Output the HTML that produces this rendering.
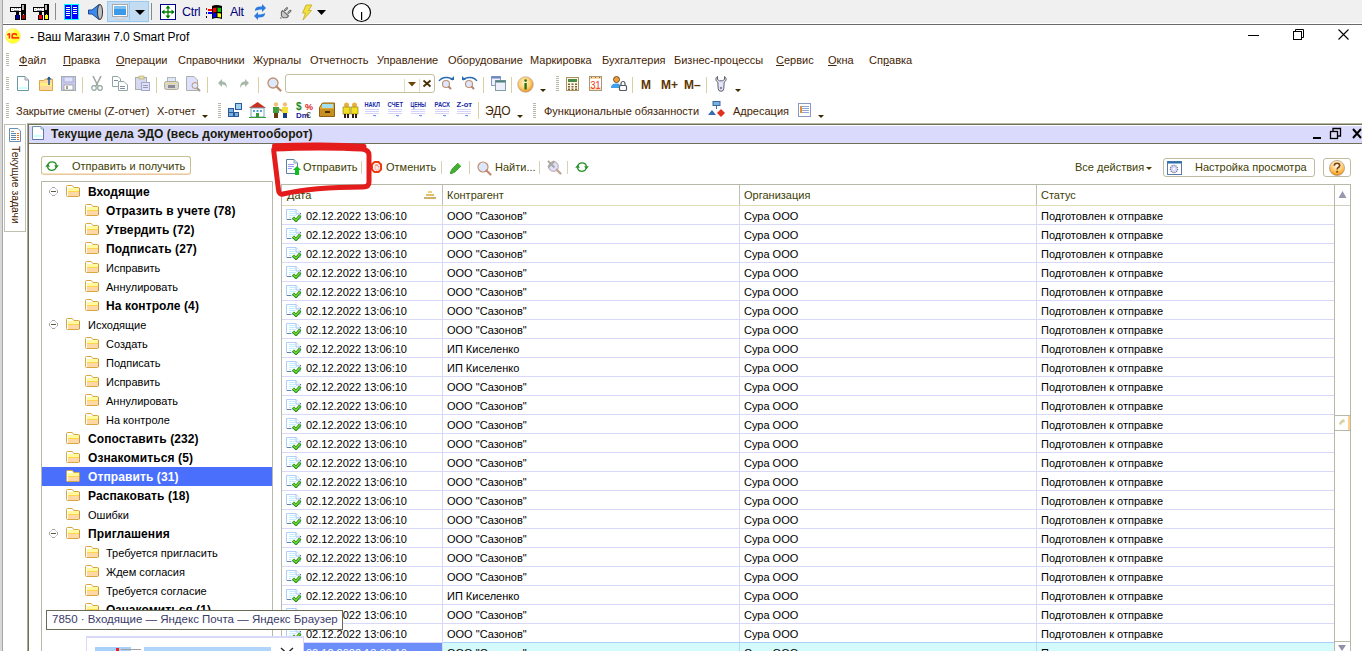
<!DOCTYPE html>
<html><head><meta charset="utf-8"><style>
html,body{margin:0;padding:0;width:1362px;height:651px;overflow:hidden;background:#fff}
body>div,body>svg{position:absolute;box-sizing:border-box}
body>div{box-sizing:content-box}
.t{white-space:pre;font-family:"Liberation Sans",sans-serif;font-size:11px;line-height:13px}
svg{overflow:visible}
</style></head><body>
<div style="left:0px;top:0px;width:1362px;height:23px;background:#f0f0f0"></div>
<div style="left:0px;top:23px;width:1362px;height:1px;background:#fff"></div>
<div style="left:0px;top:24px;width:1362px;height:1px;background:#6a6a6a"></div>
<div style="left:0px;top:0px;width:2px;height:651px;background:#d8d8d8"></div>
<div style="left:2px;top:0px;width:1px;height:651px;background:#a6a6a6"></div>
<div class="t" style="left:30px;top:31px;font-size:12px;color:#000;letter-spacing:-0.1px">- Ваш Магазин 7.0 Smart Prof</div>
<svg style="left:1248px;top:35px;" width="12" height="2" viewBox="0 0 12 2"><rect x="0" y="0" width="11" height="1" fill="#000"/></svg>
<svg style="left:1293px;top:29px;" width="12" height="12" viewBox="0 0 12 12"><rect x="0.5" y="2.5" width="8" height="8" fill="none" stroke="#000"/><path d="M2.5 2.5V0.5H10.5V8.5H8.5" fill="none" stroke="#000"/></svg>
<svg style="left:1338px;top:29px;" width="12" height="12" viewBox="0 0 12 12"><path d="M0.5 0.5L10.5 10.5M10.5 0.5L0.5 10.5" stroke="#000" stroke-width="1.1"/></svg>
<div class="t" style="left:19px;top:54px;color:#442404"><u>Ф</u>айл</div>
<div class="t" style="left:63px;top:54px;color:#442404"><u>П</u>равка</div>
<div class="t" style="left:116px;top:54px;color:#442404"><u>О</u>перации</div>
<div class="t" style="left:178px;top:54px;color:#442404">Справочники</div>
<div class="t" style="left:253px;top:54px;color:#442404">Журналы</div>
<div class="t" style="left:310px;top:54px;color:#442404">Отчетность</div>
<div class="t" style="left:377px;top:54px;color:#442404">Управление</div>
<div class="t" style="left:448px;top:54px;color:#442404">Оборудование</div>
<div class="t" style="left:530px;top:54px;color:#442404">Маркировка</div>
<div class="t" style="left:602px;top:54px;color:#442404">Бухгалтерия</div>
<div class="t" style="left:674px;top:54px;color:#442404">Бизнес-процессы</div>
<div class="t" style="left:776px;top:54px;color:#442404"><u>С</u>ервис</div>
<div class="t" style="left:828px;top:54px;color:#442404"><u>О</u>кна</div>
<div class="t" style="left:869px;top:54px;color:#442404">Сп<u>р</u>авка</div>
<svg style="left:6px;top:53px;" width="3" height="13" viewBox="0 0 3 13"><rect x="0" y="0" width="3" height="1" fill="#b8b8a8"/><rect x="0" y="2" width="3" height="1" fill="#b8b8a8"/><rect x="0" y="4" width="3" height="1" fill="#b8b8a8"/><rect x="0" y="6" width="3" height="1" fill="#b8b8a8"/><rect x="0" y="8" width="3" height="1" fill="#b8b8a8"/><rect x="0" y="10" width="3" height="1" fill="#b8b8a8"/><rect x="0" y="12" width="3" height="1" fill="#b8b8a8"/></svg>
<svg style="left:6px;top:77px;" width="3" height="14" viewBox="0 0 3 14"><rect x="0" y="0" width="3" height="1" fill="#b8b8a8"/><rect x="0" y="2" width="3" height="1" fill="#b8b8a8"/><rect x="0" y="4" width="3" height="1" fill="#b8b8a8"/><rect x="0" y="6" width="3" height="1" fill="#b8b8a8"/><rect x="0" y="8" width="3" height="1" fill="#b8b8a8"/><rect x="0" y="10" width="3" height="1" fill="#b8b8a8"/><rect x="0" y="12" width="3" height="1" fill="#b8b8a8"/></svg>
<svg style="left:17px;top:76px;" width="12" height="15" viewBox="0 0 12 15"><path d="M0.5 0.5H8L11.5 4V14.5H0.5Z" fill="#fff" stroke="#6a98a0"/><path d="M8 0.5V4H11.5" fill="#dde" stroke="#99a"/><rect x="2" y="11" width="8" height="2" fill="#cff"/></svg>
<svg style="left:39px;top:76px;" width="15" height="15" viewBox="0 0 15 15"><path d="M0.5 4.5H5L6 3H13.5V14.5H0.5Z" fill="#ffd8a0" stroke="#e0a840"/><rect x="1" y="7" width="12" height="3" fill="#fff080"/><path d="M10 1V9" stroke="#1a5aa0" stroke-width="1.5"/><path d="M7.5 3.5L10 0.5L12.5 3.5" fill="#1a5aa0"/></svg>
<svg style="left:61px;top:76px;" width="15" height="15" viewBox="0 0 15 15"><rect x="0.5" y="0.5" width="14" height="14" fill="#c8c8f0" stroke="#a0b0b0"/><rect x="3" y="1" width="9" height="5" fill="#e0e0ff" stroke="#a8a8c0" stroke-width="0.8"/><rect x="3" y="9" width="9" height="5" fill="#fff" stroke="#a0a098" stroke-width="0.8"/><rect x="5" y="10" width="2" height="3" fill="#a0a098"/></svg>
<div style="left:82px;top:77px;width:1px;height:16px;background:#d8d0a0"></div>
<svg style="left:91px;top:76px;" width="12" height="15" viewBox="0 0 12 15"><path d="M2 0L7 10M10 0L5 10" stroke="#a0a8a0" stroke-width="1.6"/><circle cx="3" cy="12" r="2.3" fill="none" stroke="#90a8a0" stroke-width="1.2"/><circle cx="9" cy="12" r="2.3" fill="none" stroke="#90a8a0" stroke-width="1.2"/></svg>
<svg style="left:112px;top:76px;" width="16" height="15" viewBox="0 0 16 15"><path d="M0.5 0.5H6L8.5 3V10.5H0.5Z" fill="#fff" stroke="#90a8a0"/><path d="M6.5 5.5H12L15.5 9V14.5H6.5Z" fill="#fff" stroke="#90a8a0"/><rect x="2" y="4" width="4" height="1" fill="#88a"/><rect x="8" y="10" width="5" height="1" fill="#88a"/><rect x="8" y="12" width="5" height="1" fill="#88a"/></svg>
<svg style="left:135px;top:76px;" width="15" height="15" viewBox="0 0 15 15"><rect x="0.5" y="1.5" width="11" height="12" fill="#d8d8f0" stroke="#a8b0a8"/><rect x="4" y="0" width="5" height="3" fill="#e8e0a0" stroke="#b0a870" stroke-width="0.6"/><rect x="6.5" y="6.5" width="8" height="8" fill="#e0e0ff" stroke="#a0a8d0"/><rect x="8" y="9" width="5" height="1" fill="#99a"/><rect x="8" y="11" width="5" height="1" fill="#99a"/></svg>
<div style="left:156px;top:77px;width:1px;height:16px;background:#d8d0a0"></div>
<svg style="left:164px;top:77px;" width="15" height="14" viewBox="0 0 15 14"><rect x="3.5" y="0.5" width="8" height="4" fill="#dde8ff" stroke="#b0b8b0"/><rect x="0.5" y="4.5" width="14" height="8" rx="2" fill="#d8d8d0" stroke="#b0a898"/><rect x="4" y="8" width="7" height="3" fill="#8a8a98"/><rect x="2" y="6" width="11" height="1" fill="#e8d890"/></svg>
<svg style="left:186px;top:76px;" width="15" height="15" viewBox="0 0 15 15"><path d="M0.5 0.5H8L11.5 4V14.5H0.5Z" fill="#dde0ff" stroke="#b0b0a8"/><circle cx="9" cy="9.5" r="3" fill="#d8e8ff" stroke="#c09070"/><path d="M11 12L14 15" stroke="#a09890" stroke-width="2"/></svg>
<div style="left:207px;top:77px;width:1px;height:16px;background:#d8d0a0"></div>
<svg style="left:218px;top:79px;" width="10" height="9" viewBox="0 0 10 9"><path d="M4 0L0 4L4 8V5.5C6.5 5.5 8 6.5 9 9C9 4.5 7 2.5 4 2.5Z" fill="#a8b8a8"/></svg>
<svg style="left:239px;top:79px;" width="10" height="9" viewBox="0 0 10 9"><path d="M6 0L10 4L6 8V5.5C3.5 5.5 2 6.5 1 9C1 4.5 3 2.5 6 2.5Z" fill="#a8b8a8"/></svg>
<div style="left:258px;top:77px;width:1px;height:16px;background:#d8d0a0"></div>
<svg style="left:267px;top:77px;" width="15" height="15" viewBox="0 0 15 15"><circle cx="6" cy="6" r="5" fill="#dde8ff" stroke="#c09070" stroke-width="1.3"/><path d="M9.5 9.5L13.5 13.5" stroke="#c08870" stroke-width="2.3" stroke-linecap="round"/></svg>
<div style="left:285px;top:74px;width:148px;height:17px;border:1px solid #c4c0a0;border-radius:3px;background:#fff"></div>
<div style="left:404px;top:79px;width:1px;height:13px;background:#e0dcc0"></div>
<div style="left:419px;top:79px;width:1px;height:13px;background:#e0dcc0"></div>
<svg style="left:408px;top:82px;" width="8" height="5" viewBox="0 0 8 5"><path d="M0 0H8L4 4.5Z" fill="#6a4408"/></svg>
<svg style="left:423px;top:80px;" width="8" height="7" viewBox="0 0 8 7"><path d="M0.5 0.5L7.5 6.5M7.5 0.5L0.5 6.5" stroke="#4a3000" stroke-width="1.8"/></svg>
<svg style="left:438px;top:76px;" width="17" height="14" viewBox="0 0 17 14"><path d="M1 5C4 0.5 12 0.5 15 4" fill="none" stroke="#2a6ab0" stroke-width="1.3"/><path d="M12 4H16V0Z" fill="#2a6ab0"/><circle cx="8" cy="8" r="3.5" fill="#dde8ff" stroke="#c09070" stroke-width="1.1"/><path d="M10.5 10.5L13 13" stroke="#b08070" stroke-width="2"/></svg>
<svg style="left:461px;top:76px;" width="17" height="14" viewBox="0 0 17 14"><path d="M2 4C5 0.5 13 0.5 16 5" fill="none" stroke="#2a6ab0" stroke-width="1.3"/><path d="M5 4H1V0Z" fill="#2a6ab0"/><circle cx="8" cy="8" r="3.5" fill="#dde8ff" stroke="#c09070" stroke-width="1.1"/><path d="M10.5 10.5L13 13" stroke="#b08070" stroke-width="2"/></svg>
<div style="left:483px;top:77px;width:1px;height:16px;background:#d8d0a0"></div>
<svg style="left:491px;top:76px;" width="15" height="15" viewBox="0 0 15 15"><rect x="0.5" y="0.5" width="9" height="9" fill="#eef" stroke="#8898c8"/><rect x="0.5" y="0.5" width="9" height="2" fill="#6888c0"/><rect x="4.5" y="4.5" width="10" height="10" fill="#eef" stroke="#80a0a0"/><rect x="4.5" y="4.5" width="10" height="2" fill="#508080"/></svg>
<div style="left:511px;top:77px;width:1px;height:16px;background:#d8d0a0"></div>
<svg style="left:517px;top:76px;" width="17" height="17" viewBox="0 0 17 17"><defs><radialGradient id="gi" cx="0.45" cy="0.4" r="0.6"><stop offset="0" stop-color="#fff8d8"/><stop offset="0.6" stop-color="#ffd070"/><stop offset="1" stop-color="#e89020"/></radialGradient></defs><circle cx="8.5" cy="8.5" r="7.8" fill="url(#gi)" stroke="#b0a0a0" stroke-width="0.6"/><rect x="7.4" y="7" width="2.4" height="6.5" fill="#307010"/><circle cx="8.6" cy="4.6" r="1.3" fill="#307010"/></svg>
<svg style="left:540px;top:89px;" width="6" height="3" viewBox="0 0 6 3"><path d="M0 0H6L3 3Z" fill="#3a2a00"/></svg>
<svg style="left:556px;top:76px;" width="3" height="15" viewBox="0 0 3 15"><rect x="0" y="0" width="3" height="1" fill="#b8b8a8"/><rect x="0" y="2" width="3" height="1" fill="#b8b8a8"/><rect x="0" y="4" width="3" height="1" fill="#b8b8a8"/><rect x="0" y="6" width="3" height="1" fill="#b8b8a8"/><rect x="0" y="8" width="3" height="1" fill="#b8b8a8"/><rect x="0" y="10" width="3" height="1" fill="#b8b8a8"/><rect x="0" y="12" width="3" height="1" fill="#b8b8a8"/><rect x="0" y="14" width="3" height="1" fill="#b8b8a8"/></svg>
<svg style="left:566px;top:77px;" width="13" height="14" viewBox="0 0 13 14"><rect x="0.5" y="0.5" width="12" height="13" fill="#fff8e0" stroke="#a89060"/><rect x="2" y="2" width="9" height="3" fill="#4a8a4a"/><g fill="#806040"><rect x="2" y="6.5" width="2" height="1.5"/><rect x="5.5" y="6.5" width="2" height="1.5"/><rect x="9" y="6.5" width="2" height="1.5"/><rect x="2" y="9" width="2" height="1.5"/><rect x="5.5" y="9" width="2" height="1.5"/><rect x="9" y="9" width="2" height="1.5"/><rect x="2" y="11.5" width="2" height="1.5"/><rect x="5.5" y="11.5" width="2" height="1.5"/><rect x="9" y="11.5" width="2" height="1.5"/></g></svg>
<svg style="left:589px;top:76px;" width="13" height="15" viewBox="0 0 13 15"><rect x="0.5" y="0.5" width="12" height="14" fill="#fff" stroke="#a89878"/><rect x="1" y="1" width="11" height="2" fill="#f8d8a0"/><g fill="#a06030"><rect x="2" y="1" width="1" height="1"/><rect x="6" y="1" width="1" height="1"/><rect x="10" y="1" width="1" height="1"/></g><rect x="1" y="11" width="11" height="3" fill="#ffe0c0"/><text x="6.5" y="12.5" font-family="Liberation Sans" font-size="10" fill="#f03010" text-anchor="middle" textLength="10" lengthAdjust="spacingAndGlyphs">31</text></svg>
<svg style="left:611px;top:76px;" width="16" height="15" viewBox="0 0 16 15"><circle cx="5.5" cy="3.5" r="3" fill="#e8a040" stroke="#603000" stroke-width="0.8"/><path d="M0 12C0 8.5 2 7.5 5.5 7.5S9 8.5 9 12Z" fill="#40a0f0"/><rect x="8.5" y="9.5" width="7" height="5" rx="1" fill="#fff" stroke="#505860" stroke-width="1.2"/><path d="M10 9.5V7.5A2 2 0 0 1 14 7.5V9.5" fill="none" stroke="#505860" stroke-width="1.2"/></svg>
<div style="left:632px;top:77px;width:1px;height:16px;background:#d8d0a0"></div>
<div class="t" style="left:641px;top:79px;font-weight:bold;font-size:12px;color:#5e3600">M</div>
<div class="t" style="left:661px;top:79px;font-weight:bold;font-size:12px;color:#5e3600">M+</div>
<div class="t" style="left:684px;top:79px;font-weight:bold;font-size:12px;color:#5e3600">M–</div>
<div style="left:706px;top:77px;width:1px;height:16px;background:#d8d0a0"></div>
<svg style="left:715px;top:76px;" width="12" height="16" viewBox="0 0 12 16"><path d="M2.5 0.5C0.3 1.5 0.3 5 2.8 6.2L3.2 12.5A2.8 2.8 0 0 0 8.8 12.5L9.2 6.2C11.7 5 11.7 1.5 9.5 0.5V3.5L7.5 4.8H4.5L2.5 3.5Z" fill="#e4e4fa" stroke="#606068" stroke-width="1"/><circle cx="6" cy="12" r="1.2" fill="#8888a0"/></svg>
<svg style="left:735px;top:89px;" width="6" height="3" viewBox="0 0 6 3"><path d="M0 0H6L3 3Z" fill="#3a2a00"/></svg>
<svg style="left:6px;top:103px;" width="3" height="15" viewBox="0 0 3 15"><rect x="0" y="0" width="3" height="1" fill="#b8b8a8"/><rect x="0" y="2" width="3" height="1" fill="#b8b8a8"/><rect x="0" y="4" width="3" height="1" fill="#b8b8a8"/><rect x="0" y="6" width="3" height="1" fill="#b8b8a8"/><rect x="0" y="8" width="3" height="1" fill="#b8b8a8"/><rect x="0" y="10" width="3" height="1" fill="#b8b8a8"/><rect x="0" y="12" width="3" height="1" fill="#b8b8a8"/><rect x="0" y="14" width="3" height="1" fill="#b8b8a8"/></svg>
<div class="t" style="left:16px;top:105px;color:#442404">Закрытие смены (Z-отчет)</div>
<div class="t" style="left:157px;top:105px;color:#442404">X-отчет</div>
<svg style="left:202px;top:115px;" width="6" height="3" viewBox="0 0 6 3"><path d="M0 0H6L3 3Z" fill="#3a2a00"/></svg>
<svg style="left:218px;top:103px;" width="3" height="15" viewBox="0 0 3 15"><rect x="0" y="0" width="3" height="1" fill="#b8b8a8"/><rect x="0" y="2" width="3" height="1" fill="#b8b8a8"/><rect x="0" y="4" width="3" height="1" fill="#b8b8a8"/><rect x="0" y="6" width="3" height="1" fill="#b8b8a8"/><rect x="0" y="8" width="3" height="1" fill="#b8b8a8"/><rect x="0" y="10" width="3" height="1" fill="#b8b8a8"/><rect x="0" y="12" width="3" height="1" fill="#b8b8a8"/><rect x="0" y="14" width="3" height="1" fill="#b8b8a8"/></svg>
<svg style="left:228px;top:103px;" width="14" height="14" viewBox="0 0 14 14"><rect x="0.5" y="5.5" width="5" height="4" fill="#7ab0e0" stroke="#2a5a9a"/><rect x="0.5" y="9.5" width="5" height="4" fill="#7ab0e0" stroke="#2a5a9a"/><rect x="6.5" y="9.5" width="4" height="4" fill="#7ab0e0" stroke="#2a5a9a"/><rect x="7.5" y="0.5" width="6" height="6" fill="#a0d0f0" stroke="#2a5a9a"/></svg>
<svg style="left:249px;top:102px;" width="17" height="16" viewBox="0 0 17 16"><path d="M0 6L8.5 0L17 6Z" fill="#c83020"/><rect x="2" y="6" width="13" height="9" fill="#fff" stroke="#7ab"/><g fill="#5aa0d8"><rect x="4" y="8" width="2" height="2"/><rect x="7.5" y="8" width="2" height="2"/><rect x="11" y="8" width="2" height="2"/></g><rect x="7" y="11" width="3" height="4" fill="#3a9a3a"/><rect x="0" y="15" width="17" height="1" fill="#3a9a3a"/></svg>
<svg style="left:272px;top:102px;" width="18" height="16" viewBox="0 0 18 16"><circle cx="4" cy="2.5" r="2.2" fill="#f0c080"/><circle cx="13" cy="2.5" r="2.2" fill="#f0c080"/><rect x="1" y="5" width="6" height="6" fill="#40a040"/><rect x="10" y="5" width="6" height="6" fill="#f0e040"/><path d="M7 7L10 9" stroke="#c08040" stroke-width="2"/><rect x="2" y="11" width="2" height="5" fill="#6a3a10"/><rect x="4" y="11" width="2" height="5" fill="#6a3a10"/><rect x="11" y="11" width="2" height="5" fill="#1a3a8a"/><rect x="13" y="11" width="2" height="5" fill="#1a3a8a"/></svg>
<svg style="left:296px;top:102px;" width="17" height="16" viewBox="0 0 17 16"><text x="0" y="8" font-family="Liberation Sans" font-weight="bold" font-size="10" fill="#1a8a1a">$</text><text x="9" y="8" font-family="Liberation Sans" font-weight="bold" font-size="9" fill="#e02020">%</text><text x="0" y="16" font-family="Liberation Sans" font-weight="bold" font-size="8" fill="#1a1aa0">Dm</text><text x="10" y="16" font-family="Liberation Sans" font-size="9" fill="#3a3a3a">€</text></svg>
<svg style="left:319px;top:102px;" width="16" height="16" viewBox="0 0 16 16"><path d="M0.5 5.5L3.5 1H15.5V14.5H0.5Z" fill="#e0a830" stroke="#8a6010"/><rect x="3" y="2" width="11" height="4" fill="#a0e0f0"/><rect x="1" y="7" width="14" height="7" fill="#c89020"/><rect x="6" y="9" width="5" height="2" fill="#503000"/></svg>
<svg style="left:342px;top:102px;" width="17" height="16" viewBox="0 0 17 16"><circle cx="4.5" cy="3" r="2.5" fill="#e8b040"/><circle cx="12.5" cy="3" r="2.5" fill="#e8b040"/><rect x="1" y="5" width="7" height="7" fill="#f0e020" stroke="#8a7010" stroke-width="0.6"/><rect x="9" y="5" width="7" height="7" fill="#f0e020" stroke="#8a7010" stroke-width="0.6"/><rect x="2" y="12" width="2" height="4" fill="#302010"/><rect x="5" y="12" width="2" height="4" fill="#302010"/><rect x="10" y="12" width="2" height="4" fill="#302010"/><rect x="13" y="12" width="2" height="4" fill="#302010"/></svg>
<svg style="left:364px;top:102px;" width="17" height="16" viewBox="0 0 17 16"><text x="0.5" y="5" font-family="Liberation Sans" font-weight="bold" font-size="6.8" fill="#1a2aa8" textLength="15.5" lengthAdjust="spacingAndGlyphs">НАКЛ</text><g fill="#d4d4f8"><rect x="1" y="7" width="14" height="1"/><rect x="1" y="9" width="14" height="1"/><rect x="1" y="11" width="14" height="1"/></g><rect x="9" y="13" width="3" height="1" fill="#8888f0"/><rect x="10" y="14" width="2" height="1" fill="#c8f0ff"/></svg>
<svg style="left:387px;top:102px;" width="17" height="16" viewBox="0 0 17 16"><text x="0.5" y="5" font-family="Liberation Sans" font-weight="bold" font-size="6.8" fill="#1a2aa8" textLength="15.5" lengthAdjust="spacingAndGlyphs">СЧЕТ</text><g fill="#d4d4f8"><rect x="1" y="7" width="14" height="1"/><rect x="1" y="9" width="14" height="1"/><rect x="1" y="11" width="14" height="1"/></g><rect x="9" y="13" width="3" height="1" fill="#8888f0"/><rect x="10" y="14" width="2" height="1" fill="#c8f0ff"/></svg>
<svg style="left:410px;top:102px;" width="17" height="16" viewBox="0 0 17 16"><text x="0.5" y="5" font-family="Liberation Sans" font-weight="bold" font-size="6.8" fill="#1a2aa8" textLength="15.5" lengthAdjust="spacingAndGlyphs">ЦЕНЫ</text><g fill="#d4d4f8"><rect x="1" y="7" width="14" height="1"/><rect x="1" y="9" width="14" height="1"/><rect x="1" y="11" width="14" height="1"/></g><rect x="9" y="13" width="3" height="1" fill="#8888f0"/><rect x="10" y="14" width="2" height="1" fill="#c8f0ff"/></svg>
<svg style="left:434px;top:102px;" width="17" height="16" viewBox="0 0 17 16"><text x="0.5" y="5" font-family="Liberation Sans" font-weight="bold" font-size="6.8" fill="#1a2aa8" textLength="15.5" lengthAdjust="spacingAndGlyphs">РАСХ</text><g fill="#d4d4f8"><rect x="1" y="7" width="14" height="1"/><rect x="1" y="9" width="14" height="1"/><rect x="1" y="11" width="14" height="1"/></g><rect x="9" y="13" width="3" height="1" fill="#8888f0"/><rect x="10" y="14" width="2" height="1" fill="#c8f0ff"/></svg>
<svg style="left:456px;top:102px;" width="17" height="16" viewBox="0 0 17 16"><text x="0.5" y="5" font-family="Liberation Sans" font-weight="bold" font-size="6.8" fill="#1a2aa8" textLength="15.5" lengthAdjust="spacingAndGlyphs">Z-от</text><g fill="#d4d4f8"><rect x="1" y="7" width="14" height="1"/><rect x="1" y="9" width="14" height="1"/><rect x="1" y="11" width="14" height="1"/></g><rect x="9" y="13" width="3" height="1" fill="#8888f0"/><rect x="10" y="14" width="2" height="1" fill="#c8f0ff"/></svg>
<div style="left:478px;top:102px;width:1px;height:17px;background:#d8d0a0"></div>
<div class="t" style="left:485px;top:105px;color:#442404;font-size:12px">ЭДО</div>
<svg style="left:517px;top:115px;" width="6" height="3" viewBox="0 0 6 3"><path d="M0 0H6L3 3Z" fill="#3a2a00"/></svg>
<svg style="left:533px;top:103px;" width="3" height="15" viewBox="0 0 3 15"><rect x="0" y="0" width="3" height="1" fill="#b8b8a8"/><rect x="0" y="2" width="3" height="1" fill="#b8b8a8"/><rect x="0" y="4" width="3" height="1" fill="#b8b8a8"/><rect x="0" y="6" width="3" height="1" fill="#b8b8a8"/><rect x="0" y="8" width="3" height="1" fill="#b8b8a8"/><rect x="0" y="10" width="3" height="1" fill="#b8b8a8"/><rect x="0" y="12" width="3" height="1" fill="#b8b8a8"/><rect x="0" y="14" width="3" height="1" fill="#b8b8a8"/></svg>
<div class="t" style="left:544px;top:105px;color:#442404">Функциональные обязанности</div>
<svg style="left:708px;top:101px;" width="17" height="17" viewBox="0 0 17 17"><rect x="5" y="0.5" width="7" height="4" fill="#7ab0e0" stroke="#3a6aa0"/><path d="M8.5 5V8" stroke="#3a6aa0"/><path d="M0 14L4 9L8 14Z" fill="#3a6ab0"/><path d="M9 12L13 8L17 12L13 16Z" fill="#e03020"/></svg>
<div class="t" style="left:733px;top:105px;color:#442404">Адресация</div>
<svg style="left:798px;top:103px;" width="13" height="14" viewBox="0 0 13 14"><rect x="0.5" y="0.5" width="12" height="13" fill="#fff" stroke="#8898c0"/><g fill="#90a8d0"><rect x="2" y="3" width="9" height="1"/><rect x="2" y="5" width="9" height="1"/><rect x="2" y="7" width="9" height="1"/><rect x="2" y="9" width="9" height="1"/></g><rect x="2" y="3" width="2" height="7" fill="#e09040"/></svg>
<svg style="left:818px;top:115px;" width="6" height="3" viewBox="0 0 6 3"><path d="M0 0H6L3 3Z" fill="#3a2a00"/></svg>
<svg style="left:10px;top:4px;" width="16" height="16" viewBox="0 0 16 16"><rect x="0" y="3" width="13" height="5" fill="#000"/><rect x="1" y="4" width="11" height="3" fill="#fff"/><g fill="#999"><rect x="2" y="5" width="1" height="1"/><rect x="4" y="4" width="1" height="1"/><rect x="6" y="4" width="1" height="1"/><rect x="8" y="4" width="1" height="1"/><rect x="4" y="6" width="5" height="1"/></g><rect x="11" y="0" width="5" height="12" fill="#000"/><rect x="12" y="1" width="2" height="5" fill="#bbb"/><rect x="13" y="10" width="1" height="2" fill="#bbb"/><rect x="6" y="8" width="3" height="4" fill="#000"/><rect x="5" y="11" width="5" height="5" fill="#000"/><rect x="6" y="11" width="3" height="4" fill="#0000a0"/><rect x="11" y="11" width="5" height="5" fill="#000"/><rect x="12" y="11" width="3" height="4" fill="#a00000"/></svg>
<svg style="left:33px;top:4px;" width="16" height="16" viewBox="0 0 16 16"><rect x="0" y="3" width="13" height="5" fill="#000"/><rect x="1" y="4" width="11" height="3" fill="#fff"/><g fill="#999"><rect x="2" y="5" width="1" height="1"/><rect x="4" y="4" width="1" height="1"/><rect x="6" y="4" width="1" height="1"/><rect x="8" y="4" width="1" height="1"/><rect x="4" y="6" width="5" height="1"/></g><rect x="11" y="0" width="5" height="12" fill="#000"/><rect x="12" y="1" width="2" height="5" fill="#bbb"/><rect x="13" y="10" width="1" height="2" fill="#bbb"/><rect x="6" y="8" width="3" height="4" fill="#000"/><rect x="5" y="11" width="5" height="5" fill="#000"/><rect x="6" y="11" width="3" height="4" fill="#ff0000"/><rect x="11" y="11" width="5" height="5" fill="#000"/><rect x="12" y="11" width="3" height="4" fill="#ffff00"/></svg>
<div style="left:55px;top:3px;width:1px;height:17px;background:#8a8a8a"></div>
<svg style="left:64px;top:4px;" width="15" height="16" viewBox="0 0 15 16"><rect x="0" y="0" width="15" height="16" fill="#00ffff"/><rect x="1" y="1" width="6" height="14" fill="#0000ff"/><rect x="8" y="1" width="6" height="14" fill="#0000ff"/><g fill="#fff"><rect x="2" y="3" width="4" height="1"/><rect x="2" y="5" width="4" height="1"/><rect x="2" y="7" width="4" height="1"/><rect x="2" y="9" width="4" height="1"/><rect x="2" y="11" width="4" height="1"/><rect x="9" y="3" width="4" height="1"/><rect x="9" y="5" width="4" height="1"/><rect x="9" y="7" width="4" height="1"/><rect x="9" y="9" width="4" height="1"/></g></svg>
<svg style="left:88px;top:4px;" width="15" height="16" viewBox="0 0 15 16"><path d="M0.5 6H4L11 0.5V15.5L4 10H0.5Z" fill="#3a8af0" stroke="#1a4a90"/><ellipse cx="12" cy="8" rx="2.5" ry="7.5" fill="#c0c0c0" stroke="#303030"/></svg>
<div style="left:107px;top:1px;width:42px;height:21px;background:#c4dcf2;border:1px solid #99c9ef;box-sizing:border-box"></div>
<div style="left:129px;top:2px;width:1px;height:18px;background:#99c9ef"></div>
<svg style="left:112px;top:4px;" width="16" height="16" viewBox="0 0 16 16"><rect x="0.5" y="0.5" width="15" height="12" fill="#fff" stroke="#aaa"/><rect x="2" y="2" width="12" height="9" fill="#3a9ae8"/><rect x="2" y="2" width="12" height="3" fill="#7ac0f0"/><rect x="6" y="13" width="4" height="2" fill="#ddd"/><rect x="3" y="15" width="10" height="1" fill="#ccc"/></svg>
<svg style="left:135px;top:10px;" width="10" height="5" viewBox="0 0 10 5"><path d="M0 0H10L5 5Z" fill="#000"/></svg>
<div style="left:151px;top:3px;width:1px;height:17px;background:#8a8a8a"></div>
<svg style="left:160px;top:4px;" width="16" height="16" viewBox="0 0 16 16"><rect x="0.5" y="0.5" width="15" height="15" fill="#fff" stroke="#00008a"/><path d="M8 2V14M2 8H14" stroke="#008000" stroke-width="1.3"/><path d="M8 1.5L5.5 4.5H10.5ZM8 14.5L5.5 11.5H10.5ZM1.5 8L4.5 5.5V10.5ZM14.5 8L11.5 5.5V10.5Z" fill="#008000"/></svg>
<div class="t" style="left:182px;top:6px;font-size:12.5px;color:#00007a;letter-spacing:-0.3px">Ctrl</div>
<svg style="left:206px;top:5px;" width="17" height="14" viewBox="0 0 17 14"><rect x="0" y="3" width="1" height="2" fill="#f00"/><rect x="0" y="7" width="1" height="2" fill="#00f"/><rect x="0" y="11" width="1" height="2" fill="#000"/><rect x="2" y="4" width="4" height="2" fill="#f00"/><rect x="2" y="7" width="4" height="2" fill="#00f"/><path d="M6 1Q10 -1 16 1V14Q10 12 6 14Z" fill="#000"/><path d="M7 3L10.5 2.5V7L7 7.5Z" fill="#f00"/><path d="M11.5 2.5L15 3V7L11.5 7Z" fill="#0c0"/><path d="M7 8.5L10.5 8V12L7 12.5Z" fill="#00f"/><path d="M11.5 8L15 8.5V12.5L11.5 12Z" fill="#ff0"/></svg>
<div class="t" style="left:230px;top:6px;font-size:12.5px;color:#00007a;letter-spacing:-0.3px">Alt</div>
<svg style="left:254px;top:4px;" width="12" height="16" viewBox="0 0 12 16"><path d="M1 7C1 3 4 2.5 8 2.5V0L12 4L8 8V5.5C5 5.5 3.5 6 1 7Z" fill="#2a7ae0"/><path d="M11 9C11 13 8 13.5 4 13.5V16L0 12L4 8V10.5C7 10.5 8.5 10 11 9Z" fill="#2a7ae0"/></svg>
<svg style="left:279px;top:7px;" width="13" height="13" viewBox="0 0 13 13"><path d="M6 3.2L8 1.2M9.4 5.8L11.4 3.8" stroke="#606060" stroke-width="2.2" stroke-linecap="round"/><path d="M6 3.2L8 1.2M9.4 5.8L11.4 3.8" stroke="#e0e0e0" stroke-width="0.8"/><path d="M3.6 3.6L9.6 8.8Q8.6 10.8 7 10.8H4.4L2.4 8.8V5Z" fill="#c8c8c8" stroke="#686868" stroke-width="1.1"/><path d="M4.5 4.5L8.6 8.2" stroke="#707070" stroke-width="0.8"/><path d="M2.4 10.4L1.4 11.6" stroke="#808080" stroke-width="1.6"/></svg>
<svg style="left:301px;top:5px;" width="12" height="15" viewBox="0 0 12 15"><path d="M5 0H11L7.5 5.5H10.5L2 15L4.5 8H1.5Z" fill="#f0e040" stroke="#c8a820" stroke-width="0.8"/></svg>
<svg style="left:317px;top:10px;" width="9" height="5" viewBox="0 0 9 5"><path d="M0 0H9L4.5 5Z" fill="#000"/></svg>
<svg style="left:352px;top:3px;" width="19" height="19" viewBox="0 0 19 19"><circle cx="9.5" cy="9.5" r="9" fill="#fff" stroke="#000" stroke-width="1.2"/><rect x="9" y="9" width="1.2" height="8" fill="#000"/></svg>
<svg style="left:5px;top:28px;" width="16" height="16" viewBox="0 0 16 16"><circle cx="8" cy="8" r="7.6" fill="#ffff30" stroke="#f4d8a0" stroke-width="0.8" stroke-dasharray="1 1"/><path d="M1 8A7 7 0 0 1 8 1L10 1.5L5 13L1.5 10Z" fill="#ffffa0" opacity="0.8"/><path d="M2 6.2L4 5H5.2V10.6H3.6V7L2.2 7.6Z" fill="#ff3a00"/><path d="M7.2 10.5V7.2Q7.2 5.8 8.6 5.8H10.2Q11.6 5.8 11.6 7.4" fill="none" stroke="#ff3a00" stroke-width="1.7"/><path d="M7.2 9.8H14.2" stroke="#ff3a00" stroke-width="1.7"/></svg>
<div style="left:4px;top:124px;width:20px;height:106px;border:1px solid #c0c0b0;background:#fff"></div>
<svg style="left:9px;top:128px;" width="12" height="14" viewBox="0 0 12 14"><path d="M0.5 0.5H9L11.5 3V13.5H0.5Z" fill="#fff" stroke="#6890b0"/><g><rect x="2" y="3" width="3" height="1" fill="#999"/><rect x="2" y="5" width="5" height="1" fill="#58a"/><rect x="8" y="5" width="2" height="1" fill="#f60"/><rect x="2" y="7" width="5" height="1" fill="#58a"/><rect x="8" y="7" width="2" height="1" fill="#f60"/><rect x="2" y="9" width="5" height="1" fill="#58a"/><rect x="8" y="9" width="2" height="1" fill="#f60"/><rect x="2" y="11" width="5" height="1" fill="#58a"/><rect x="8" y="11" width="2" height="1" fill="#f60"/></g></svg>
<div class="t" style="left:9px;top:146px;width:13px;height:80px;writing-mode:vertical-rl;font-size:10.4px;line-height:13px;color:#442404">Текущие задачи</div>
<div style="left:27px;top:123px;width:1335px;height:1px;background:#b8b8a8"></div>
<div style="left:27px;top:123px;width:1px;height:528px;background:#a8a898"></div>
<div style="left:28px;top:124px;width:1334px;height:1px;background:#707058"></div>
<div style="left:28px;top:124px;width:1px;height:527px;background:#707058"></div>
<div style="left:29px;top:126px;width:1333px;height:17px;background:#dadafc"></div>
<div style="left:29px;top:143px;width:1333px;height:1px;background:#707058"></div>
<svg style="left:32px;top:126px;" width="12" height="14" viewBox="0 0 12 14"><path d="M0.5 0.5H9L11.5 3V13.5H0.5Z" fill="#fff" stroke="#6890a8"/><path d="M9 0.5V3H11.5" fill="#cde" stroke="#8ab"/><path d="M11.5 3V13.5H0.5" fill="none" stroke="#6070b0"/><rect x="2" y="9" width="8" height="2" fill="#cff"/></svg>
<div class="t" style="left:51px;top:128px;font-weight:bold;font-size:12px;color:#1a1a08;letter-spacing:0.05px">Текущие дела ЭДО (весь документооборот)</div>
<div style="left:1313px;top:137px;width:8px;height:2px;background:#000"></div>
<svg style="left:1330px;top:128px;" width="11" height="11" viewBox="0 0 11 11"><rect x="0.5" y="3.5" width="7" height="7" fill="none" stroke="#000" stroke-width="1.3"/><path d="M3 3V0.5H10.5V8H8" fill="none" stroke="#000" stroke-width="1.3"/></svg>
<svg style="left:1352px;top:128px;" width="10" height="11" viewBox="0 0 10 11"><path d="M1 1L9 10M9 1L1 10" stroke="#000" stroke-width="2"/></svg>
<div style="left:41px;top:156px;width:148px;height:17px;border:1px solid #c8c090;border-bottom-color:#e8c8a0;border-radius:3px;background:#fff;box-shadow:inset 0 -1px 0 #f8e0c0"></div>
<svg style="left:45px;top:161px;" width="14" height="10" viewBox="0 0 14 10"><path d="M2.8 5.5C2.8 2 5 0.8 7 0.8C9.3 0.8 11 2 11.4 4.3" fill="none" stroke="#209020" stroke-width="1.3"/><path d="M9.2 4.2H13.8L11.5 7.2Z" fill="#209020"/><path d="M11.2 4.8C11.2 8 9 9.3 7 9.3C4.7 9.3 3 8 2.6 5.8" fill="none" stroke="#209020" stroke-width="1.3"/><path d="M0.2 5.8L2.6 2.8L5 5.8Z" fill="#209020"/></svg>
<div class="t" style="left:72px;top:160px;color:#404004">Отправить и получить</div>
<svg style="left:286px;top:159px;" width="15" height="16" viewBox="0 0 15 16"><path d="M0.5 0.5H8L11.5 4V14.5H0.5Z" fill="#fff" stroke="#5a80a0"/><path d="M8 0.5V4H11.5" fill="#cde" stroke="#8ab"/><g fill="#9a9af0"><rect x="2" y="5" width="6" height="1"/><rect x="2" y="7" width="6" height="1"/><rect x="2" y="9" width="4" height="1"/></g><path d="M11 7L15 11H13V16H9V11H7Z" fill="#10c020"/></svg>
<div class="t" style="left:303px;top:161px;color:#404004">Отправить</div>
<div style="left:361px;top:161px;width:1px;height:13px;background:#d8d0b0"></div>
<svg style="left:371px;top:161px;" width="11" height="12" viewBox="0 0 11 12"><path d="M3.5 1H7.5L10 3.5V8.5L7.5 11H3.5L1 8.5V3.5Z" fill="#fff" stroke="#f03a10" stroke-width="2"/><path d="M4 4V8L6 9.5L8 7.5V5L7 6V3.5L6 5V3L5 5V3.5Z" fill="#ffe8e8" stroke="#f07060" stroke-width="0.5"/></svg>
<div class="t" style="left:386px;top:161px;color:#404004">Отменить</div>
<div style="left:441px;top:161px;width:1px;height:13px;background:#d8d0b0"></div>
<svg style="left:450px;top:163px;" width="12" height="11" viewBox="0 0 12 11"><path d="M0 10L2 6L8 0L11 3L5 9L1 11Z" fill="#40b030" stroke="#2a8020" stroke-width="0.6"/><path d="M8 0L11 3" stroke="#a0e070"/></svg>
<div style="left:469px;top:161px;width:1px;height:13px;background:#d8d0b0"></div>
<svg style="left:477px;top:161px;" width="15" height="15" viewBox="0 0 15 15"><circle cx="6" cy="6" r="5" fill="#dde8ff" stroke="#c09070" stroke-width="1.2"/><path d="M9.5 9.5L13.5 13.5" stroke="#c08870" stroke-width="2.2" stroke-linecap="round"/></svg>
<div class="t" style="left:495px;top:161px;color:#404004">Найти...</div>
<div style="left:539px;top:161px;width:1px;height:13px;background:#d8d0b0"></div>
<svg style="left:547px;top:160px;" width="15" height="15" viewBox="0 0 15 15"><circle cx="6.5" cy="6.5" r="4.8" fill="#dde0ff" stroke="#c8b0b0" stroke-width="1.2"/><path d="M9.8 9.8L13.5 13.5" stroke="#c0a898" stroke-width="2.4" stroke-linecap="round"/><path d="M1 1L7.5 7.5M7.5 1L1 7.5" stroke="#a8a8a0" stroke-width="1.8"/></svg>
<div style="left:567px;top:161px;width:1px;height:13px;background:#d8d0b0"></div>
<svg style="left:575px;top:162px;" width="14" height="10" viewBox="0 0 14 10"><path d="M2.8 5.5C2.8 2 5 0.8 7 0.8C9.3 0.8 11 2 11.4 4.3" fill="none" stroke="#209020" stroke-width="1.3"/><path d="M9.2 4.2H13.8L11.5 7.2Z" fill="#209020"/><path d="M11.2 4.8C11.2 8 9 9.3 7 9.3C4.7 9.3 3 8 2.6 5.8" fill="none" stroke="#209020" stroke-width="1.3"/><path d="M0.2 5.8L2.6 2.8L5 5.8Z" fill="#209020"/></svg>
<div class="t" style="left:1075px;top:161px;color:#404004">Все действия</div>
<svg style="left:1146px;top:167px;" width="6" height="3" viewBox="0 0 6 3"><path d="M0 0H6L3 3Z" fill="#4a3a00"/></svg>
<div style="left:1163px;top:158px;width:150px;height:17px;border:1px solid #c0bca0;border-radius:3px;background:#fff"></div>
<svg style="left:1167px;top:161px;" width="15" height="14" viewBox="0 0 15 14"><rect x="0.5" y="0.5" width="14" height="13" fill="#fff" stroke="#5a7aa8"/><rect x="0.5" y="0.5" width="14" height="2" fill="#2a70a8"/><circle cx="7" cy="8" r="3.6" fill="#d8d8ff" stroke="#707888" stroke-width="1.2" stroke-dasharray="1.2 0.8"/><circle cx="7" cy="8" r="1.2" fill="#fff"/></svg>
<div class="t" style="left:1195px;top:161px;color:#404004">Настройка просмотра</div>
<div style="left:1323px;top:158px;width:26px;height:17px;border:1px solid #c0bca0;border-radius:3px;background:#fff"></div>
<svg style="left:1329px;top:160px;" width="16" height="16" viewBox="0 0 16 16"><defs><radialGradient id="gh" cx="0.5" cy="0.3" r="0.7"><stop offset="0" stop-color="#ffffff"/><stop offset="0.35" stop-color="#ffe0b0"/><stop offset="0.8" stop-color="#ffb030"/><stop offset="1" stop-color="#d08020"/></radialGradient></defs><circle cx="8" cy="8" r="7.6" fill="url(#gh)" stroke="#a09080" stroke-width="0.6"/><path d="M5.3 5.8Q5.3 3.2 8 3.2Q10.7 3.2 10.7 5.6Q10.7 7 9 7.8Q8.2 8.2 8.2 9.5" fill="none" stroke="#7a4008" stroke-width="1.6"/><rect x="7.3" y="10.8" width="1.8" height="1.8" fill="#7a4008"/></svg>
<div style="left:41px;top:181px;width:230px;height:480px;border:1px solid #b8b8a8;background:#fff"></div>
<svg style="left:49px;top:187px;" width="9" height="9" viewBox="0 0 9 9"><g fill="#a8a890"><rect x="3" y="0" width="3" height="1"/><rect x="3" y="8" width="3" height="1"/><rect x="0" y="3" width="1" height="3"/><rect x="8" y="3" width="1" height="3"/></g><g fill="#c4c4ff"><rect x="2" y="1" width="1" height="1"/><rect x="1" y="2" width="1" height="1"/><rect x="6" y="1" width="1" height="1"/><rect x="7" y="2" width="1" height="1"/><rect x="1" y="6" width="1" height="1"/><rect x="2" y="7" width="1" height="1"/><rect x="7" y="6" width="1" height="1"/><rect x="6" y="7" width="1" height="1"/></g><rect x="2" y="4" width="5" height="1" fill="#5a5a40"/></svg>
<svg style="left:66px;top:185px;" width="14" height="12" viewBox="0 0 14 12"><path d="M0.5 10.5V1.5Q0.5 0.5 1.5 0.5H6.3L7.8 2.5H12.5Q13.5 2.5 13.5 3.5V10.5Q13.5 11.5 12.5 11.5H1.5Q0.5 11.5 0.5 10.5Z" fill="#fff" stroke="#d8a840"/><rect x="2" y="3" width="11" height="3" fill="#fffaa0"/><rect x="2" y="6" width="11" height="1" fill="#ffd448"/><rect x="2" y="7" width="11" height="4" fill="#ffd8a8"/><rect x="13" y="3" width="1" height="8" fill="#c89848"/></svg>
<div class="t" style="left:88px;top:186px;color:#000;font-weight:bold;font-size:12px;letter-spacing:0.1px">Входящие</div>
<svg style="left:85px;top:204px;" width="14" height="12" viewBox="0 0 14 12"><path d="M0.5 10.5V1.5Q0.5 0.5 1.5 0.5H6.3L7.8 2.5H12.5Q13.5 2.5 13.5 3.5V10.5Q13.5 11.5 12.5 11.5H1.5Q0.5 11.5 0.5 10.5Z" fill="#fff" stroke="#d8a840"/><rect x="2" y="3" width="11" height="3" fill="#fffaa0"/><rect x="2" y="6" width="11" height="1" fill="#ffd448"/><rect x="2" y="7" width="11" height="4" fill="#ffd8a8"/><rect x="13" y="3" width="1" height="8" fill="#c89848"/></svg>
<div class="t" style="left:106px;top:205px;color:#000;font-weight:bold;font-size:12px;letter-spacing:0.1px">Отразить в учете (78)</div>
<svg style="left:85px;top:223px;" width="14" height="12" viewBox="0 0 14 12"><path d="M0.5 10.5V1.5Q0.5 0.5 1.5 0.5H6.3L7.8 2.5H12.5Q13.5 2.5 13.5 3.5V10.5Q13.5 11.5 12.5 11.5H1.5Q0.5 11.5 0.5 10.5Z" fill="#fff" stroke="#d8a840"/><rect x="2" y="3" width="11" height="3" fill="#fffaa0"/><rect x="2" y="6" width="11" height="1" fill="#ffd448"/><rect x="2" y="7" width="11" height="4" fill="#ffd8a8"/><rect x="13" y="3" width="1" height="8" fill="#c89848"/></svg>
<div class="t" style="left:106px;top:224px;color:#000;font-weight:bold;font-size:12px;letter-spacing:0.1px">Утвердить (72)</div>
<svg style="left:85px;top:242px;" width="14" height="12" viewBox="0 0 14 12"><path d="M0.5 10.5V1.5Q0.5 0.5 1.5 0.5H6.3L7.8 2.5H12.5Q13.5 2.5 13.5 3.5V10.5Q13.5 11.5 12.5 11.5H1.5Q0.5 11.5 0.5 10.5Z" fill="#fff" stroke="#d8a840"/><rect x="2" y="3" width="11" height="3" fill="#fffaa0"/><rect x="2" y="6" width="11" height="1" fill="#ffd448"/><rect x="2" y="7" width="11" height="4" fill="#ffd8a8"/><rect x="13" y="3" width="1" height="8" fill="#c89848"/></svg>
<div class="t" style="left:106px;top:243px;color:#000;font-weight:bold;font-size:12px;letter-spacing:0.1px">Подписать (27)</div>
<svg style="left:85px;top:261px;" width="14" height="12" viewBox="0 0 14 12"><path d="M0.5 10.5V1.5Q0.5 0.5 1.5 0.5H6.3L7.8 2.5H12.5Q13.5 2.5 13.5 3.5V10.5Q13.5 11.5 12.5 11.5H1.5Q0.5 11.5 0.5 10.5Z" fill="#fff" stroke="#d8a840"/><rect x="2" y="3" width="11" height="3" fill="#fffaa0"/><rect x="2" y="6" width="11" height="1" fill="#ffd448"/><rect x="2" y="7" width="11" height="4" fill="#ffd8a8"/><rect x="13" y="3" width="1" height="8" fill="#c89848"/></svg>
<div class="t" style="left:106px;top:262px;color:#000">Исправить</div>
<svg style="left:85px;top:280px;" width="14" height="12" viewBox="0 0 14 12"><path d="M0.5 10.5V1.5Q0.5 0.5 1.5 0.5H6.3L7.8 2.5H12.5Q13.5 2.5 13.5 3.5V10.5Q13.5 11.5 12.5 11.5H1.5Q0.5 11.5 0.5 10.5Z" fill="#fff" stroke="#d8a840"/><rect x="2" y="3" width="11" height="3" fill="#fffaa0"/><rect x="2" y="6" width="11" height="1" fill="#ffd448"/><rect x="2" y="7" width="11" height="4" fill="#ffd8a8"/><rect x="13" y="3" width="1" height="8" fill="#c89848"/></svg>
<div class="t" style="left:106px;top:281px;color:#000">Аннулировать</div>
<svg style="left:85px;top:299px;" width="14" height="12" viewBox="0 0 14 12"><path d="M0.5 10.5V1.5Q0.5 0.5 1.5 0.5H6.3L7.8 2.5H12.5Q13.5 2.5 13.5 3.5V10.5Q13.5 11.5 12.5 11.5H1.5Q0.5 11.5 0.5 10.5Z" fill="#fff" stroke="#d8a840"/><rect x="2" y="3" width="11" height="3" fill="#fffaa0"/><rect x="2" y="6" width="11" height="1" fill="#ffd448"/><rect x="2" y="7" width="11" height="4" fill="#ffd8a8"/><rect x="13" y="3" width="1" height="8" fill="#c89848"/></svg>
<div class="t" style="left:106px;top:300px;color:#000;font-weight:bold;font-size:12px;letter-spacing:0.1px">На контроле (4)</div>
<svg style="left:49px;top:320px;" width="9" height="9" viewBox="0 0 9 9"><g fill="#a8a890"><rect x="3" y="0" width="3" height="1"/><rect x="3" y="8" width="3" height="1"/><rect x="0" y="3" width="1" height="3"/><rect x="8" y="3" width="1" height="3"/></g><g fill="#c4c4ff"><rect x="2" y="1" width="1" height="1"/><rect x="1" y="2" width="1" height="1"/><rect x="6" y="1" width="1" height="1"/><rect x="7" y="2" width="1" height="1"/><rect x="1" y="6" width="1" height="1"/><rect x="2" y="7" width="1" height="1"/><rect x="7" y="6" width="1" height="1"/><rect x="6" y="7" width="1" height="1"/></g><rect x="2" y="4" width="5" height="1" fill="#5a5a40"/></svg>
<svg style="left:66px;top:318px;" width="14" height="12" viewBox="0 0 14 12"><path d="M0.5 10.5V1.5Q0.5 0.5 1.5 0.5H6.3L7.8 2.5H12.5Q13.5 2.5 13.5 3.5V10.5Q13.5 11.5 12.5 11.5H1.5Q0.5 11.5 0.5 10.5Z" fill="#fff" stroke="#d8a840"/><rect x="2" y="3" width="11" height="3" fill="#fffaa0"/><rect x="2" y="6" width="11" height="1" fill="#ffd448"/><rect x="2" y="7" width="11" height="4" fill="#ffd8a8"/><rect x="13" y="3" width="1" height="8" fill="#c89848"/></svg>
<div class="t" style="left:88px;top:319px;color:#000">Исходящие</div>
<svg style="left:85px;top:337px;" width="14" height="12" viewBox="0 0 14 12"><path d="M0.5 10.5V1.5Q0.5 0.5 1.5 0.5H6.3L7.8 2.5H12.5Q13.5 2.5 13.5 3.5V10.5Q13.5 11.5 12.5 11.5H1.5Q0.5 11.5 0.5 10.5Z" fill="#fff" stroke="#d8a840"/><rect x="2" y="3" width="11" height="3" fill="#fffaa0"/><rect x="2" y="6" width="11" height="1" fill="#ffd448"/><rect x="2" y="7" width="11" height="4" fill="#ffd8a8"/><rect x="13" y="3" width="1" height="8" fill="#c89848"/></svg>
<div class="t" style="left:106px;top:338px;color:#000">Создать</div>
<svg style="left:85px;top:356px;" width="14" height="12" viewBox="0 0 14 12"><path d="M0.5 10.5V1.5Q0.5 0.5 1.5 0.5H6.3L7.8 2.5H12.5Q13.5 2.5 13.5 3.5V10.5Q13.5 11.5 12.5 11.5H1.5Q0.5 11.5 0.5 10.5Z" fill="#fff" stroke="#d8a840"/><rect x="2" y="3" width="11" height="3" fill="#fffaa0"/><rect x="2" y="6" width="11" height="1" fill="#ffd448"/><rect x="2" y="7" width="11" height="4" fill="#ffd8a8"/><rect x="13" y="3" width="1" height="8" fill="#c89848"/></svg>
<div class="t" style="left:106px;top:357px;color:#000">Подписать</div>
<svg style="left:85px;top:375px;" width="14" height="12" viewBox="0 0 14 12"><path d="M0.5 10.5V1.5Q0.5 0.5 1.5 0.5H6.3L7.8 2.5H12.5Q13.5 2.5 13.5 3.5V10.5Q13.5 11.5 12.5 11.5H1.5Q0.5 11.5 0.5 10.5Z" fill="#fff" stroke="#d8a840"/><rect x="2" y="3" width="11" height="3" fill="#fffaa0"/><rect x="2" y="6" width="11" height="1" fill="#ffd448"/><rect x="2" y="7" width="11" height="4" fill="#ffd8a8"/><rect x="13" y="3" width="1" height="8" fill="#c89848"/></svg>
<div class="t" style="left:106px;top:376px;color:#000">Исправить</div>
<svg style="left:85px;top:394px;" width="14" height="12" viewBox="0 0 14 12"><path d="M0.5 10.5V1.5Q0.5 0.5 1.5 0.5H6.3L7.8 2.5H12.5Q13.5 2.5 13.5 3.5V10.5Q13.5 11.5 12.5 11.5H1.5Q0.5 11.5 0.5 10.5Z" fill="#fff" stroke="#d8a840"/><rect x="2" y="3" width="11" height="3" fill="#fffaa0"/><rect x="2" y="6" width="11" height="1" fill="#ffd448"/><rect x="2" y="7" width="11" height="4" fill="#ffd8a8"/><rect x="13" y="3" width="1" height="8" fill="#c89848"/></svg>
<div class="t" style="left:106px;top:395px;color:#000">Аннулировать</div>
<svg style="left:85px;top:413px;" width="14" height="12" viewBox="0 0 14 12"><path d="M0.5 10.5V1.5Q0.5 0.5 1.5 0.5H6.3L7.8 2.5H12.5Q13.5 2.5 13.5 3.5V10.5Q13.5 11.5 12.5 11.5H1.5Q0.5 11.5 0.5 10.5Z" fill="#fff" stroke="#d8a840"/><rect x="2" y="3" width="11" height="3" fill="#fffaa0"/><rect x="2" y="6" width="11" height="1" fill="#ffd448"/><rect x="2" y="7" width="11" height="4" fill="#ffd8a8"/><rect x="13" y="3" width="1" height="8" fill="#c89848"/></svg>
<div class="t" style="left:106px;top:414px;color:#000">На контроле</div>
<svg style="left:66px;top:432px;" width="14" height="12" viewBox="0 0 14 12"><path d="M0.5 10.5V1.5Q0.5 0.5 1.5 0.5H6.3L7.8 2.5H12.5Q13.5 2.5 13.5 3.5V10.5Q13.5 11.5 12.5 11.5H1.5Q0.5 11.5 0.5 10.5Z" fill="#fff" stroke="#d8a840"/><rect x="2" y="3" width="11" height="3" fill="#fffaa0"/><rect x="2" y="6" width="11" height="1" fill="#ffd448"/><rect x="2" y="7" width="11" height="4" fill="#ffd8a8"/><rect x="13" y="3" width="1" height="8" fill="#c89848"/></svg>
<div class="t" style="left:88px;top:433px;color:#000;font-weight:bold;font-size:12px;letter-spacing:0.1px">Сопоставить (232)</div>
<svg style="left:66px;top:451px;" width="14" height="12" viewBox="0 0 14 12"><path d="M0.5 10.5V1.5Q0.5 0.5 1.5 0.5H6.3L7.8 2.5H12.5Q13.5 2.5 13.5 3.5V10.5Q13.5 11.5 12.5 11.5H1.5Q0.5 11.5 0.5 10.5Z" fill="#fff" stroke="#d8a840"/><rect x="2" y="3" width="11" height="3" fill="#fffaa0"/><rect x="2" y="6" width="11" height="1" fill="#ffd448"/><rect x="2" y="7" width="11" height="4" fill="#ffd8a8"/><rect x="13" y="3" width="1" height="8" fill="#c89848"/></svg>
<div class="t" style="left:88px;top:452px;color:#000;font-weight:bold;font-size:12px;letter-spacing:0.1px">Ознакомиться (5)</div>
<div style="left:42px;top:467px;width:230px;height:19px;background:#4a6ffd"></div>
<svg style="left:66px;top:470px;" width="14" height="12" viewBox="0 0 14 12"><path d="M0.5 10.5V1.5Q0.5 0.5 1.5 0.5H6.3L7.8 2.5H12.5Q13.5 2.5 13.5 3.5V10.5Q13.5 11.5 12.5 11.5H1.5Q0.5 11.5 0.5 10.5Z" fill="#fff" stroke="#d8a840"/><rect x="2" y="3" width="11" height="3" fill="#fffaa0"/><rect x="2" y="6" width="11" height="1" fill="#ffd448"/><rect x="2" y="7" width="11" height="4" fill="#ffd8a8"/><rect x="13" y="3" width="1" height="8" fill="#c89848"/></svg>
<div class="t" style="left:88px;top:471px;color:#fff;font-weight:bold;font-size:12px;letter-spacing:0.1px">Отправить (31)</div>
<svg style="left:66px;top:489px;" width="14" height="12" viewBox="0 0 14 12"><path d="M0.5 10.5V1.5Q0.5 0.5 1.5 0.5H6.3L7.8 2.5H12.5Q13.5 2.5 13.5 3.5V10.5Q13.5 11.5 12.5 11.5H1.5Q0.5 11.5 0.5 10.5Z" fill="#fff" stroke="#d8a840"/><rect x="2" y="3" width="11" height="3" fill="#fffaa0"/><rect x="2" y="6" width="11" height="1" fill="#ffd448"/><rect x="2" y="7" width="11" height="4" fill="#ffd8a8"/><rect x="13" y="3" width="1" height="8" fill="#c89848"/></svg>
<div class="t" style="left:88px;top:490px;color:#000;font-weight:bold;font-size:12px;letter-spacing:0.1px">Распаковать (18)</div>
<svg style="left:66px;top:508px;" width="14" height="12" viewBox="0 0 14 12"><path d="M0.5 10.5V1.5Q0.5 0.5 1.5 0.5H6.3L7.8 2.5H12.5Q13.5 2.5 13.5 3.5V10.5Q13.5 11.5 12.5 11.5H1.5Q0.5 11.5 0.5 10.5Z" fill="#fff" stroke="#d8a840"/><rect x="2" y="3" width="11" height="3" fill="#fffaa0"/><rect x="2" y="6" width="11" height="1" fill="#ffd448"/><rect x="2" y="7" width="11" height="4" fill="#ffd8a8"/><rect x="13" y="3" width="1" height="8" fill="#c89848"/></svg>
<div class="t" style="left:88px;top:509px;color:#000">Ошибки</div>
<svg style="left:49px;top:529px;" width="9" height="9" viewBox="0 0 9 9"><g fill="#a8a890"><rect x="3" y="0" width="3" height="1"/><rect x="3" y="8" width="3" height="1"/><rect x="0" y="3" width="1" height="3"/><rect x="8" y="3" width="1" height="3"/></g><g fill="#c4c4ff"><rect x="2" y="1" width="1" height="1"/><rect x="1" y="2" width="1" height="1"/><rect x="6" y="1" width="1" height="1"/><rect x="7" y="2" width="1" height="1"/><rect x="1" y="6" width="1" height="1"/><rect x="2" y="7" width="1" height="1"/><rect x="7" y="6" width="1" height="1"/><rect x="6" y="7" width="1" height="1"/></g><rect x="2" y="4" width="5" height="1" fill="#5a5a40"/></svg>
<svg style="left:66px;top:527px;" width="14" height="12" viewBox="0 0 14 12"><path d="M0.5 10.5V1.5Q0.5 0.5 1.5 0.5H6.3L7.8 2.5H12.5Q13.5 2.5 13.5 3.5V10.5Q13.5 11.5 12.5 11.5H1.5Q0.5 11.5 0.5 10.5Z" fill="#fff" stroke="#d8a840"/><rect x="2" y="3" width="11" height="3" fill="#fffaa0"/><rect x="2" y="6" width="11" height="1" fill="#ffd448"/><rect x="2" y="7" width="11" height="4" fill="#ffd8a8"/><rect x="13" y="3" width="1" height="8" fill="#c89848"/></svg>
<div class="t" style="left:88px;top:528px;color:#000;font-weight:bold;font-size:12px;letter-spacing:0.1px">Приглашения</div>
<svg style="left:85px;top:546px;" width="14" height="12" viewBox="0 0 14 12"><path d="M0.5 10.5V1.5Q0.5 0.5 1.5 0.5H6.3L7.8 2.5H12.5Q13.5 2.5 13.5 3.5V10.5Q13.5 11.5 12.5 11.5H1.5Q0.5 11.5 0.5 10.5Z" fill="#fff" stroke="#d8a840"/><rect x="2" y="3" width="11" height="3" fill="#fffaa0"/><rect x="2" y="6" width="11" height="1" fill="#ffd448"/><rect x="2" y="7" width="11" height="4" fill="#ffd8a8"/><rect x="13" y="3" width="1" height="8" fill="#c89848"/></svg>
<div class="t" style="left:106px;top:547px;color:#000">Требуется пригласить</div>
<svg style="left:85px;top:565px;" width="14" height="12" viewBox="0 0 14 12"><path d="M0.5 10.5V1.5Q0.5 0.5 1.5 0.5H6.3L7.8 2.5H12.5Q13.5 2.5 13.5 3.5V10.5Q13.5 11.5 12.5 11.5H1.5Q0.5 11.5 0.5 10.5Z" fill="#fff" stroke="#d8a840"/><rect x="2" y="3" width="11" height="3" fill="#fffaa0"/><rect x="2" y="6" width="11" height="1" fill="#ffd448"/><rect x="2" y="7" width="11" height="4" fill="#ffd8a8"/><rect x="13" y="3" width="1" height="8" fill="#c89848"/></svg>
<div class="t" style="left:106px;top:566px;color:#000">Ждем согласия</div>
<svg style="left:85px;top:584px;" width="14" height="12" viewBox="0 0 14 12"><path d="M0.5 10.5V1.5Q0.5 0.5 1.5 0.5H6.3L7.8 2.5H12.5Q13.5 2.5 13.5 3.5V10.5Q13.5 11.5 12.5 11.5H1.5Q0.5 11.5 0.5 10.5Z" fill="#fff" stroke="#d8a840"/><rect x="2" y="3" width="11" height="3" fill="#fffaa0"/><rect x="2" y="6" width="11" height="1" fill="#ffd448"/><rect x="2" y="7" width="11" height="4" fill="#ffd8a8"/><rect x="13" y="3" width="1" height="8" fill="#c89848"/></svg>
<div class="t" style="left:106px;top:585px;color:#000">Требуется согласие</div>
<svg style="left:85px;top:603px;" width="14" height="12" viewBox="0 0 14 12"><path d="M0.5 10.5V1.5Q0.5 0.5 1.5 0.5H6.3L7.8 2.5H12.5Q13.5 2.5 13.5 3.5V10.5Q13.5 11.5 12.5 11.5H1.5Q0.5 11.5 0.5 10.5Z" fill="#fff" stroke="#d8a840"/><rect x="2" y="3" width="11" height="3" fill="#fffaa0"/><rect x="2" y="6" width="11" height="1" fill="#ffd448"/><rect x="2" y="7" width="11" height="4" fill="#ffd8a8"/><rect x="13" y="3" width="1" height="8" fill="#c89848"/></svg>
<div class="t" style="left:106px;top:604px;color:#000;font-weight:bold;font-size:12px;letter-spacing:0.1px">Ознакомиться (1)</div>
<div style="left:281px;top:184px;width:1068px;height:480px;border:1px solid #b8b8a8;background:#fff"></div>
<div style="left:1334px;top:185px;width:1px;height:466px;background:#b8b8a8"></div>
<div style="left:1335px;top:205px;width:15px;height:1px;background:#d0d0c0"></div>
<svg style="left:1338px;top:191px;" width="9" height="8" viewBox="0 0 9 8"><path d="M4.5 0L8.5 7H0.5Z" fill="#9898b0"/></svg>
<div style="left:1335px;top:415px;width:15px;height:1px;background:#b8b8a8"></div>
<div style="left:1335px;top:430px;width:15px;height:1px;background:#b8b8a8"></div>
<div style="left:1348px;top:416px;width:2px;height:14px;background:#ffd088"></div>
<svg style="left:1339px;top:419px;" width="6" height="6" viewBox="0 0 6 6"><path d="M0 5Q1 1 5 0L6 3Q3 3 2 6Z" fill="#d8d0a0"/></svg>
<div style="left:1335px;top:641px;width:15px;height:1px;background:#b8b8a8"></div>
<svg style="left:1337px;top:645px;" width="10" height="6" viewBox="0 0 10 6"><path d="M1 0H9L5 6Z" fill="#9090a8"/></svg>
<div style="left:282px;top:205px;width:1052px;height:1px;background:#e0dcb8"></div>
<div style="left:442px;top:185px;width:1px;height:20px;background:#c0c0b0"></div>
<div style="left:442px;top:206px;width:1px;height:445px;background:#d8d8f8"></div>
<div style="left:739px;top:185px;width:1px;height:20px;background:#c0c0b0"></div>
<div style="left:739px;top:206px;width:1px;height:445px;background:#d8d8f8"></div>
<div style="left:1036px;top:185px;width:1px;height:20px;background:#c0c0b0"></div>
<div style="left:1036px;top:206px;width:1px;height:445px;background:#d8d8f8"></div>
<div class="t" style="left:287px;top:189px;color:#404004">Дата</div>
<svg style="left:424px;top:191px;" width="12" height="8" viewBox="0 0 12 8"><rect x="4" y="0" width="4" height="2" fill="#f0d080"/><rect x="2" y="3" width="8" height="2" fill="#e0c070"/><rect x="0" y="6" width="12" height="2" fill="#d0b070"/></svg>
<div class="t" style="left:447px;top:189px;color:#404004">Контрагент</div>
<div class="t" style="left:744px;top:189px;color:#404004">Организация</div>
<div class="t" style="left:1041px;top:189px;color:#404004">Статус</div>
<div style="left:282px;top:224px;width:1052px;height:1px;background:#d8d8f8"></div>
<svg style="left:286px;top:209px;" width="16" height="14" viewBox="0 0 16 14"><path d="M0.5 0.5H10L14.5 5V10.5H0.5Z" fill="#fff" stroke="#b0d0f8"/><path d="M10 0.5V5H14.5" fill="#f4f8ff" stroke="#a8c0f0"/><rect x="14" y="4" width="1" height="1" fill="#507090"/><g fill="#bff0ff"><rect x="3" y="2" width="6" height="1"/><rect x="3" y="4" width="6" height="1"/><rect x="3" y="6" width="7" height="1"/><rect x="3" y="8" width="2" height="1"/></g><rect x="1" y="10" width="4" height="1" fill="#6080a0"/><path d="M7 8.5L10 11.5L14.3 6.6" fill="none" stroke="#208010" stroke-width="3" stroke-linejoin="round"/><path d="M7.3 8.7L10 11.3L14 6.8" fill="none" stroke="#70e030" stroke-width="1.4"/></svg>
<div class="t" style="left:306px;top:210px;color:#000">02.12.2022 13:06:10</div>
<div class="t" style="left:447px;top:210px;color:#000">ООО "Сазонов"</div>
<div class="t" style="left:744px;top:210px;color:#000">Сура ООО</div>
<div class="t" style="left:1041px;top:210px;color:#000">Подготовлен к отправке</div>
<div style="left:282px;top:243px;width:1052px;height:1px;background:#d8d8f8"></div>
<svg style="left:286px;top:228px;" width="16" height="14" viewBox="0 0 16 14"><path d="M0.5 0.5H10L14.5 5V10.5H0.5Z" fill="#fff" stroke="#b0d0f8"/><path d="M10 0.5V5H14.5" fill="#f4f8ff" stroke="#a8c0f0"/><rect x="14" y="4" width="1" height="1" fill="#507090"/><g fill="#bff0ff"><rect x="3" y="2" width="6" height="1"/><rect x="3" y="4" width="6" height="1"/><rect x="3" y="6" width="7" height="1"/><rect x="3" y="8" width="2" height="1"/></g><rect x="1" y="10" width="4" height="1" fill="#6080a0"/><path d="M7 8.5L10 11.5L14.3 6.6" fill="none" stroke="#208010" stroke-width="3" stroke-linejoin="round"/><path d="M7.3 8.7L10 11.3L14 6.8" fill="none" stroke="#70e030" stroke-width="1.4"/></svg>
<div class="t" style="left:306px;top:229px;color:#000">02.12.2022 13:06:10</div>
<div class="t" style="left:447px;top:229px;color:#000">ООО "Сазонов"</div>
<div class="t" style="left:744px;top:229px;color:#000">Сура ООО</div>
<div class="t" style="left:1041px;top:229px;color:#000">Подготовлен к отправке</div>
<div style="left:282px;top:262px;width:1052px;height:1px;background:#d8d8f8"></div>
<svg style="left:286px;top:247px;" width="16" height="14" viewBox="0 0 16 14"><path d="M0.5 0.5H10L14.5 5V10.5H0.5Z" fill="#fff" stroke="#b0d0f8"/><path d="M10 0.5V5H14.5" fill="#f4f8ff" stroke="#a8c0f0"/><rect x="14" y="4" width="1" height="1" fill="#507090"/><g fill="#bff0ff"><rect x="3" y="2" width="6" height="1"/><rect x="3" y="4" width="6" height="1"/><rect x="3" y="6" width="7" height="1"/><rect x="3" y="8" width="2" height="1"/></g><rect x="1" y="10" width="4" height="1" fill="#6080a0"/><path d="M7 8.5L10 11.5L14.3 6.6" fill="none" stroke="#208010" stroke-width="3" stroke-linejoin="round"/><path d="M7.3 8.7L10 11.3L14 6.8" fill="none" stroke="#70e030" stroke-width="1.4"/></svg>
<div class="t" style="left:306px;top:248px;color:#000">02.12.2022 13:06:10</div>
<div class="t" style="left:447px;top:248px;color:#000">ООО "Сазонов"</div>
<div class="t" style="left:744px;top:248px;color:#000">Сура ООО</div>
<div class="t" style="left:1041px;top:248px;color:#000">Подготовлен к отправке</div>
<div style="left:282px;top:281px;width:1052px;height:1px;background:#d8d8f8"></div>
<svg style="left:286px;top:266px;" width="16" height="14" viewBox="0 0 16 14"><path d="M0.5 0.5H10L14.5 5V10.5H0.5Z" fill="#fff" stroke="#b0d0f8"/><path d="M10 0.5V5H14.5" fill="#f4f8ff" stroke="#a8c0f0"/><rect x="14" y="4" width="1" height="1" fill="#507090"/><g fill="#bff0ff"><rect x="3" y="2" width="6" height="1"/><rect x="3" y="4" width="6" height="1"/><rect x="3" y="6" width="7" height="1"/><rect x="3" y="8" width="2" height="1"/></g><rect x="1" y="10" width="4" height="1" fill="#6080a0"/><path d="M7 8.5L10 11.5L14.3 6.6" fill="none" stroke="#208010" stroke-width="3" stroke-linejoin="round"/><path d="M7.3 8.7L10 11.3L14 6.8" fill="none" stroke="#70e030" stroke-width="1.4"/></svg>
<div class="t" style="left:306px;top:267px;color:#000">02.12.2022 13:06:10</div>
<div class="t" style="left:447px;top:267px;color:#000">ООО "Сазонов"</div>
<div class="t" style="left:744px;top:267px;color:#000">Сура ООО</div>
<div class="t" style="left:1041px;top:267px;color:#000">Подготовлен к отправке</div>
<div style="left:282px;top:300px;width:1052px;height:1px;background:#d8d8f8"></div>
<svg style="left:286px;top:285px;" width="16" height="14" viewBox="0 0 16 14"><path d="M0.5 0.5H10L14.5 5V10.5H0.5Z" fill="#fff" stroke="#b0d0f8"/><path d="M10 0.5V5H14.5" fill="#f4f8ff" stroke="#a8c0f0"/><rect x="14" y="4" width="1" height="1" fill="#507090"/><g fill="#bff0ff"><rect x="3" y="2" width="6" height="1"/><rect x="3" y="4" width="6" height="1"/><rect x="3" y="6" width="7" height="1"/><rect x="3" y="8" width="2" height="1"/></g><rect x="1" y="10" width="4" height="1" fill="#6080a0"/><path d="M7 8.5L10 11.5L14.3 6.6" fill="none" stroke="#208010" stroke-width="3" stroke-linejoin="round"/><path d="M7.3 8.7L10 11.3L14 6.8" fill="none" stroke="#70e030" stroke-width="1.4"/></svg>
<div class="t" style="left:306px;top:286px;color:#000">02.12.2022 13:06:10</div>
<div class="t" style="left:447px;top:286px;color:#000">ООО "Сазонов"</div>
<div class="t" style="left:744px;top:286px;color:#000">Сура ООО</div>
<div class="t" style="left:1041px;top:286px;color:#000">Подготовлен к отправке</div>
<div style="left:282px;top:319px;width:1052px;height:1px;background:#d8d8f8"></div>
<svg style="left:286px;top:304px;" width="16" height="14" viewBox="0 0 16 14"><path d="M0.5 0.5H10L14.5 5V10.5H0.5Z" fill="#fff" stroke="#b0d0f8"/><path d="M10 0.5V5H14.5" fill="#f4f8ff" stroke="#a8c0f0"/><rect x="14" y="4" width="1" height="1" fill="#507090"/><g fill="#bff0ff"><rect x="3" y="2" width="6" height="1"/><rect x="3" y="4" width="6" height="1"/><rect x="3" y="6" width="7" height="1"/><rect x="3" y="8" width="2" height="1"/></g><rect x="1" y="10" width="4" height="1" fill="#6080a0"/><path d="M7 8.5L10 11.5L14.3 6.6" fill="none" stroke="#208010" stroke-width="3" stroke-linejoin="round"/><path d="M7.3 8.7L10 11.3L14 6.8" fill="none" stroke="#70e030" stroke-width="1.4"/></svg>
<div class="t" style="left:306px;top:305px;color:#000">02.12.2022 13:06:10</div>
<div class="t" style="left:447px;top:305px;color:#000">ООО "Сазонов"</div>
<div class="t" style="left:744px;top:305px;color:#000">Сура ООО</div>
<div class="t" style="left:1041px;top:305px;color:#000">Подготовлен к отправке</div>
<div style="left:282px;top:338px;width:1052px;height:1px;background:#d8d8f8"></div>
<svg style="left:286px;top:323px;" width="16" height="14" viewBox="0 0 16 14"><path d="M0.5 0.5H10L14.5 5V10.5H0.5Z" fill="#fff" stroke="#b0d0f8"/><path d="M10 0.5V5H14.5" fill="#f4f8ff" stroke="#a8c0f0"/><rect x="14" y="4" width="1" height="1" fill="#507090"/><g fill="#bff0ff"><rect x="3" y="2" width="6" height="1"/><rect x="3" y="4" width="6" height="1"/><rect x="3" y="6" width="7" height="1"/><rect x="3" y="8" width="2" height="1"/></g><rect x="1" y="10" width="4" height="1" fill="#6080a0"/><path d="M7 8.5L10 11.5L14.3 6.6" fill="none" stroke="#208010" stroke-width="3" stroke-linejoin="round"/><path d="M7.3 8.7L10 11.3L14 6.8" fill="none" stroke="#70e030" stroke-width="1.4"/></svg>
<div class="t" style="left:306px;top:324px;color:#000">02.12.2022 13:06:10</div>
<div class="t" style="left:447px;top:324px;color:#000">ООО "Сазонов"</div>
<div class="t" style="left:744px;top:324px;color:#000">Сура ООО</div>
<div class="t" style="left:1041px;top:324px;color:#000">Подготовлен к отправке</div>
<div style="left:282px;top:357px;width:1052px;height:1px;background:#d8d8f8"></div>
<svg style="left:286px;top:342px;" width="16" height="14" viewBox="0 0 16 14"><path d="M0.5 0.5H10L14.5 5V10.5H0.5Z" fill="#fff" stroke="#b0d0f8"/><path d="M10 0.5V5H14.5" fill="#f4f8ff" stroke="#a8c0f0"/><rect x="14" y="4" width="1" height="1" fill="#507090"/><g fill="#bff0ff"><rect x="3" y="2" width="6" height="1"/><rect x="3" y="4" width="6" height="1"/><rect x="3" y="6" width="7" height="1"/><rect x="3" y="8" width="2" height="1"/></g><rect x="1" y="10" width="4" height="1" fill="#6080a0"/><path d="M7 8.5L10 11.5L14.3 6.6" fill="none" stroke="#208010" stroke-width="3" stroke-linejoin="round"/><path d="M7.3 8.7L10 11.3L14 6.8" fill="none" stroke="#70e030" stroke-width="1.4"/></svg>
<div class="t" style="left:306px;top:343px;color:#000">02.12.2022 13:06:10</div>
<div class="t" style="left:447px;top:343px;color:#000">ИП Киселенко</div>
<div class="t" style="left:744px;top:343px;color:#000">Сура ООО</div>
<div class="t" style="left:1041px;top:343px;color:#000">Подготовлен к отправке</div>
<div style="left:282px;top:376px;width:1052px;height:1px;background:#d8d8f8"></div>
<svg style="left:286px;top:361px;" width="16" height="14" viewBox="0 0 16 14"><path d="M0.5 0.5H10L14.5 5V10.5H0.5Z" fill="#fff" stroke="#b0d0f8"/><path d="M10 0.5V5H14.5" fill="#f4f8ff" stroke="#a8c0f0"/><rect x="14" y="4" width="1" height="1" fill="#507090"/><g fill="#bff0ff"><rect x="3" y="2" width="6" height="1"/><rect x="3" y="4" width="6" height="1"/><rect x="3" y="6" width="7" height="1"/><rect x="3" y="8" width="2" height="1"/></g><rect x="1" y="10" width="4" height="1" fill="#6080a0"/><path d="M7 8.5L10 11.5L14.3 6.6" fill="none" stroke="#208010" stroke-width="3" stroke-linejoin="round"/><path d="M7.3 8.7L10 11.3L14 6.8" fill="none" stroke="#70e030" stroke-width="1.4"/></svg>
<div class="t" style="left:306px;top:362px;color:#000">02.12.2022 13:06:10</div>
<div class="t" style="left:447px;top:362px;color:#000">ИП Киселенко</div>
<div class="t" style="left:744px;top:362px;color:#000">Сура ООО</div>
<div class="t" style="left:1041px;top:362px;color:#000">Подготовлен к отправке</div>
<div style="left:282px;top:395px;width:1052px;height:1px;background:#d8d8f8"></div>
<svg style="left:286px;top:380px;" width="16" height="14" viewBox="0 0 16 14"><path d="M0.5 0.5H10L14.5 5V10.5H0.5Z" fill="#fff" stroke="#b0d0f8"/><path d="M10 0.5V5H14.5" fill="#f4f8ff" stroke="#a8c0f0"/><rect x="14" y="4" width="1" height="1" fill="#507090"/><g fill="#bff0ff"><rect x="3" y="2" width="6" height="1"/><rect x="3" y="4" width="6" height="1"/><rect x="3" y="6" width="7" height="1"/><rect x="3" y="8" width="2" height="1"/></g><rect x="1" y="10" width="4" height="1" fill="#6080a0"/><path d="M7 8.5L10 11.5L14.3 6.6" fill="none" stroke="#208010" stroke-width="3" stroke-linejoin="round"/><path d="M7.3 8.7L10 11.3L14 6.8" fill="none" stroke="#70e030" stroke-width="1.4"/></svg>
<div class="t" style="left:306px;top:381px;color:#000">02.12.2022 13:06:10</div>
<div class="t" style="left:447px;top:381px;color:#000">ООО "Сазонов"</div>
<div class="t" style="left:744px;top:381px;color:#000">Сура ООО</div>
<div class="t" style="left:1041px;top:381px;color:#000">Подготовлен к отправке</div>
<div style="left:282px;top:414px;width:1052px;height:1px;background:#d8d8f8"></div>
<svg style="left:286px;top:399px;" width="16" height="14" viewBox="0 0 16 14"><path d="M0.5 0.5H10L14.5 5V10.5H0.5Z" fill="#fff" stroke="#b0d0f8"/><path d="M10 0.5V5H14.5" fill="#f4f8ff" stroke="#a8c0f0"/><rect x="14" y="4" width="1" height="1" fill="#507090"/><g fill="#bff0ff"><rect x="3" y="2" width="6" height="1"/><rect x="3" y="4" width="6" height="1"/><rect x="3" y="6" width="7" height="1"/><rect x="3" y="8" width="2" height="1"/></g><rect x="1" y="10" width="4" height="1" fill="#6080a0"/><path d="M7 8.5L10 11.5L14.3 6.6" fill="none" stroke="#208010" stroke-width="3" stroke-linejoin="round"/><path d="M7.3 8.7L10 11.3L14 6.8" fill="none" stroke="#70e030" stroke-width="1.4"/></svg>
<div class="t" style="left:306px;top:400px;color:#000">02.12.2022 13:06:10</div>
<div class="t" style="left:447px;top:400px;color:#000">ООО "Сазонов"</div>
<div class="t" style="left:744px;top:400px;color:#000">Сура ООО</div>
<div class="t" style="left:1041px;top:400px;color:#000">Подготовлен к отправке</div>
<div style="left:282px;top:433px;width:1052px;height:1px;background:#d8d8f8"></div>
<svg style="left:286px;top:418px;" width="16" height="14" viewBox="0 0 16 14"><path d="M0.5 0.5H10L14.5 5V10.5H0.5Z" fill="#fff" stroke="#b0d0f8"/><path d="M10 0.5V5H14.5" fill="#f4f8ff" stroke="#a8c0f0"/><rect x="14" y="4" width="1" height="1" fill="#507090"/><g fill="#bff0ff"><rect x="3" y="2" width="6" height="1"/><rect x="3" y="4" width="6" height="1"/><rect x="3" y="6" width="7" height="1"/><rect x="3" y="8" width="2" height="1"/></g><rect x="1" y="10" width="4" height="1" fill="#6080a0"/><path d="M7 8.5L10 11.5L14.3 6.6" fill="none" stroke="#208010" stroke-width="3" stroke-linejoin="round"/><path d="M7.3 8.7L10 11.3L14 6.8" fill="none" stroke="#70e030" stroke-width="1.4"/></svg>
<div class="t" style="left:306px;top:419px;color:#000">02.12.2022 13:06:10</div>
<div class="t" style="left:447px;top:419px;color:#000">ООО "Сазонов"</div>
<div class="t" style="left:744px;top:419px;color:#000">Сура ООО</div>
<div class="t" style="left:1041px;top:419px;color:#000">Подготовлен к отправке</div>
<div style="left:282px;top:452px;width:1052px;height:1px;background:#d8d8f8"></div>
<svg style="left:286px;top:437px;" width="16" height="14" viewBox="0 0 16 14"><path d="M0.5 0.5H10L14.5 5V10.5H0.5Z" fill="#fff" stroke="#b0d0f8"/><path d="M10 0.5V5H14.5" fill="#f4f8ff" stroke="#a8c0f0"/><rect x="14" y="4" width="1" height="1" fill="#507090"/><g fill="#bff0ff"><rect x="3" y="2" width="6" height="1"/><rect x="3" y="4" width="6" height="1"/><rect x="3" y="6" width="7" height="1"/><rect x="3" y="8" width="2" height="1"/></g><rect x="1" y="10" width="4" height="1" fill="#6080a0"/><path d="M7 8.5L10 11.5L14.3 6.6" fill="none" stroke="#208010" stroke-width="3" stroke-linejoin="round"/><path d="M7.3 8.7L10 11.3L14 6.8" fill="none" stroke="#70e030" stroke-width="1.4"/></svg>
<div class="t" style="left:306px;top:438px;color:#000">02.12.2022 13:06:10</div>
<div class="t" style="left:447px;top:438px;color:#000">ООО "Сазонов"</div>
<div class="t" style="left:744px;top:438px;color:#000">Сура ООО</div>
<div class="t" style="left:1041px;top:438px;color:#000">Подготовлен к отправке</div>
<div style="left:282px;top:471px;width:1052px;height:1px;background:#d8d8f8"></div>
<svg style="left:286px;top:456px;" width="16" height="14" viewBox="0 0 16 14"><path d="M0.5 0.5H10L14.5 5V10.5H0.5Z" fill="#fff" stroke="#b0d0f8"/><path d="M10 0.5V5H14.5" fill="#f4f8ff" stroke="#a8c0f0"/><rect x="14" y="4" width="1" height="1" fill="#507090"/><g fill="#bff0ff"><rect x="3" y="2" width="6" height="1"/><rect x="3" y="4" width="6" height="1"/><rect x="3" y="6" width="7" height="1"/><rect x="3" y="8" width="2" height="1"/></g><rect x="1" y="10" width="4" height="1" fill="#6080a0"/><path d="M7 8.5L10 11.5L14.3 6.6" fill="none" stroke="#208010" stroke-width="3" stroke-linejoin="round"/><path d="M7.3 8.7L10 11.3L14 6.8" fill="none" stroke="#70e030" stroke-width="1.4"/></svg>
<div class="t" style="left:306px;top:457px;color:#000">02.12.2022 13:06:10</div>
<div class="t" style="left:447px;top:457px;color:#000">ООО "Сазонов"</div>
<div class="t" style="left:744px;top:457px;color:#000">Сура ООО</div>
<div class="t" style="left:1041px;top:457px;color:#000">Подготовлен к отправке</div>
<div style="left:282px;top:490px;width:1052px;height:1px;background:#d8d8f8"></div>
<svg style="left:286px;top:475px;" width="16" height="14" viewBox="0 0 16 14"><path d="M0.5 0.5H10L14.5 5V10.5H0.5Z" fill="#fff" stroke="#b0d0f8"/><path d="M10 0.5V5H14.5" fill="#f4f8ff" stroke="#a8c0f0"/><rect x="14" y="4" width="1" height="1" fill="#507090"/><g fill="#bff0ff"><rect x="3" y="2" width="6" height="1"/><rect x="3" y="4" width="6" height="1"/><rect x="3" y="6" width="7" height="1"/><rect x="3" y="8" width="2" height="1"/></g><rect x="1" y="10" width="4" height="1" fill="#6080a0"/><path d="M7 8.5L10 11.5L14.3 6.6" fill="none" stroke="#208010" stroke-width="3" stroke-linejoin="round"/><path d="M7.3 8.7L10 11.3L14 6.8" fill="none" stroke="#70e030" stroke-width="1.4"/></svg>
<div class="t" style="left:306px;top:476px;color:#000">02.12.2022 13:06:10</div>
<div class="t" style="left:447px;top:476px;color:#000">ООО "Сазонов"</div>
<div class="t" style="left:744px;top:476px;color:#000">Сура ООО</div>
<div class="t" style="left:1041px;top:476px;color:#000">Подготовлен к отправке</div>
<div style="left:282px;top:509px;width:1052px;height:1px;background:#d8d8f8"></div>
<svg style="left:286px;top:494px;" width="16" height="14" viewBox="0 0 16 14"><path d="M0.5 0.5H10L14.5 5V10.5H0.5Z" fill="#fff" stroke="#b0d0f8"/><path d="M10 0.5V5H14.5" fill="#f4f8ff" stroke="#a8c0f0"/><rect x="14" y="4" width="1" height="1" fill="#507090"/><g fill="#bff0ff"><rect x="3" y="2" width="6" height="1"/><rect x="3" y="4" width="6" height="1"/><rect x="3" y="6" width="7" height="1"/><rect x="3" y="8" width="2" height="1"/></g><rect x="1" y="10" width="4" height="1" fill="#6080a0"/><path d="M7 8.5L10 11.5L14.3 6.6" fill="none" stroke="#208010" stroke-width="3" stroke-linejoin="round"/><path d="M7.3 8.7L10 11.3L14 6.8" fill="none" stroke="#70e030" stroke-width="1.4"/></svg>
<div class="t" style="left:306px;top:495px;color:#000">02.12.2022 13:06:10</div>
<div class="t" style="left:447px;top:495px;color:#000">ООО "Сазонов"</div>
<div class="t" style="left:744px;top:495px;color:#000">Сура ООО</div>
<div class="t" style="left:1041px;top:495px;color:#000">Подготовлен к отправке</div>
<div style="left:282px;top:528px;width:1052px;height:1px;background:#d8d8f8"></div>
<svg style="left:286px;top:513px;" width="16" height="14" viewBox="0 0 16 14"><path d="M0.5 0.5H10L14.5 5V10.5H0.5Z" fill="#fff" stroke="#b0d0f8"/><path d="M10 0.5V5H14.5" fill="#f4f8ff" stroke="#a8c0f0"/><rect x="14" y="4" width="1" height="1" fill="#507090"/><g fill="#bff0ff"><rect x="3" y="2" width="6" height="1"/><rect x="3" y="4" width="6" height="1"/><rect x="3" y="6" width="7" height="1"/><rect x="3" y="8" width="2" height="1"/></g><rect x="1" y="10" width="4" height="1" fill="#6080a0"/><path d="M7 8.5L10 11.5L14.3 6.6" fill="none" stroke="#208010" stroke-width="3" stroke-linejoin="round"/><path d="M7.3 8.7L10 11.3L14 6.8" fill="none" stroke="#70e030" stroke-width="1.4"/></svg>
<div class="t" style="left:306px;top:514px;color:#000">02.12.2022 13:06:10</div>
<div class="t" style="left:447px;top:514px;color:#000">ООО "Сазонов"</div>
<div class="t" style="left:744px;top:514px;color:#000">Сура ООО</div>
<div class="t" style="left:1041px;top:514px;color:#000">Подготовлен к отправке</div>
<div style="left:282px;top:547px;width:1052px;height:1px;background:#d8d8f8"></div>
<svg style="left:286px;top:532px;" width="16" height="14" viewBox="0 0 16 14"><path d="M0.5 0.5H10L14.5 5V10.5H0.5Z" fill="#fff" stroke="#b0d0f8"/><path d="M10 0.5V5H14.5" fill="#f4f8ff" stroke="#a8c0f0"/><rect x="14" y="4" width="1" height="1" fill="#507090"/><g fill="#bff0ff"><rect x="3" y="2" width="6" height="1"/><rect x="3" y="4" width="6" height="1"/><rect x="3" y="6" width="7" height="1"/><rect x="3" y="8" width="2" height="1"/></g><rect x="1" y="10" width="4" height="1" fill="#6080a0"/><path d="M7 8.5L10 11.5L14.3 6.6" fill="none" stroke="#208010" stroke-width="3" stroke-linejoin="round"/><path d="M7.3 8.7L10 11.3L14 6.8" fill="none" stroke="#70e030" stroke-width="1.4"/></svg>
<div class="t" style="left:306px;top:533px;color:#000">02.12.2022 13:06:10</div>
<div class="t" style="left:447px;top:533px;color:#000">ООО "Сазонов"</div>
<div class="t" style="left:744px;top:533px;color:#000">Сура ООО</div>
<div class="t" style="left:1041px;top:533px;color:#000">Подготовлен к отправке</div>
<div style="left:282px;top:566px;width:1052px;height:1px;background:#d8d8f8"></div>
<svg style="left:286px;top:551px;" width="16" height="14" viewBox="0 0 16 14"><path d="M0.5 0.5H10L14.5 5V10.5H0.5Z" fill="#fff" stroke="#b0d0f8"/><path d="M10 0.5V5H14.5" fill="#f4f8ff" stroke="#a8c0f0"/><rect x="14" y="4" width="1" height="1" fill="#507090"/><g fill="#bff0ff"><rect x="3" y="2" width="6" height="1"/><rect x="3" y="4" width="6" height="1"/><rect x="3" y="6" width="7" height="1"/><rect x="3" y="8" width="2" height="1"/></g><rect x="1" y="10" width="4" height="1" fill="#6080a0"/><path d="M7 8.5L10 11.5L14.3 6.6" fill="none" stroke="#208010" stroke-width="3" stroke-linejoin="round"/><path d="M7.3 8.7L10 11.3L14 6.8" fill="none" stroke="#70e030" stroke-width="1.4"/></svg>
<div class="t" style="left:306px;top:552px;color:#000">02.12.2022 13:06:10</div>
<div class="t" style="left:447px;top:552px;color:#000">ООО "Сазонов"</div>
<div class="t" style="left:744px;top:552px;color:#000">Сура ООО</div>
<div class="t" style="left:1041px;top:552px;color:#000">Подготовлен к отправке</div>
<div style="left:282px;top:585px;width:1052px;height:1px;background:#d8d8f8"></div>
<svg style="left:286px;top:570px;" width="16" height="14" viewBox="0 0 16 14"><path d="M0.5 0.5H10L14.5 5V10.5H0.5Z" fill="#fff" stroke="#b0d0f8"/><path d="M10 0.5V5H14.5" fill="#f4f8ff" stroke="#a8c0f0"/><rect x="14" y="4" width="1" height="1" fill="#507090"/><g fill="#bff0ff"><rect x="3" y="2" width="6" height="1"/><rect x="3" y="4" width="6" height="1"/><rect x="3" y="6" width="7" height="1"/><rect x="3" y="8" width="2" height="1"/></g><rect x="1" y="10" width="4" height="1" fill="#6080a0"/><path d="M7 8.5L10 11.5L14.3 6.6" fill="none" stroke="#208010" stroke-width="3" stroke-linejoin="round"/><path d="M7.3 8.7L10 11.3L14 6.8" fill="none" stroke="#70e030" stroke-width="1.4"/></svg>
<div class="t" style="left:306px;top:571px;color:#000">02.12.2022 13:06:10</div>
<div class="t" style="left:447px;top:571px;color:#000">ООО "Сазонов"</div>
<div class="t" style="left:744px;top:571px;color:#000">Сура ООО</div>
<div class="t" style="left:1041px;top:571px;color:#000">Подготовлен к отправке</div>
<div style="left:282px;top:604px;width:1052px;height:1px;background:#d8d8f8"></div>
<svg style="left:286px;top:589px;" width="16" height="14" viewBox="0 0 16 14"><path d="M0.5 0.5H10L14.5 5V10.5H0.5Z" fill="#fff" stroke="#b0d0f8"/><path d="M10 0.5V5H14.5" fill="#f4f8ff" stroke="#a8c0f0"/><rect x="14" y="4" width="1" height="1" fill="#507090"/><g fill="#bff0ff"><rect x="3" y="2" width="6" height="1"/><rect x="3" y="4" width="6" height="1"/><rect x="3" y="6" width="7" height="1"/><rect x="3" y="8" width="2" height="1"/></g><rect x="1" y="10" width="4" height="1" fill="#6080a0"/><path d="M7 8.5L10 11.5L14.3 6.6" fill="none" stroke="#208010" stroke-width="3" stroke-linejoin="round"/><path d="M7.3 8.7L10 11.3L14 6.8" fill="none" stroke="#70e030" stroke-width="1.4"/></svg>
<div class="t" style="left:306px;top:590px;color:#000">02.12.2022 13:06:10</div>
<div class="t" style="left:447px;top:590px;color:#000">ИП Киселенко</div>
<div class="t" style="left:744px;top:590px;color:#000">Сура ООО</div>
<div class="t" style="left:1041px;top:590px;color:#000">Подготовлен к отправке</div>
<div style="left:282px;top:623px;width:1052px;height:1px;background:#d8d8f8"></div>
<svg style="left:286px;top:608px;" width="16" height="14" viewBox="0 0 16 14"><path d="M0.5 0.5H10L14.5 5V10.5H0.5Z" fill="#fff" stroke="#b0d0f8"/><path d="M10 0.5V5H14.5" fill="#f4f8ff" stroke="#a8c0f0"/><rect x="14" y="4" width="1" height="1" fill="#507090"/><g fill="#bff0ff"><rect x="3" y="2" width="6" height="1"/><rect x="3" y="4" width="6" height="1"/><rect x="3" y="6" width="7" height="1"/><rect x="3" y="8" width="2" height="1"/></g><rect x="1" y="10" width="4" height="1" fill="#6080a0"/><path d="M7 8.5L10 11.5L14.3 6.6" fill="none" stroke="#208010" stroke-width="3" stroke-linejoin="round"/><path d="M7.3 8.7L10 11.3L14 6.8" fill="none" stroke="#70e030" stroke-width="1.4"/></svg>
<div class="t" style="left:306px;top:609px;color:#000">02.12.2022 13:06:10</div>
<div class="t" style="left:447px;top:609px;color:#000">ООО "Сазонов"</div>
<div class="t" style="left:744px;top:609px;color:#000">Сура ООО</div>
<div class="t" style="left:1041px;top:609px;color:#000">Подготовлен к отправке</div>
<div style="left:282px;top:642px;width:1052px;height:1px;background:#d8d8f8"></div>
<svg style="left:286px;top:627px;" width="16" height="14" viewBox="0 0 16 14"><path d="M0.5 0.5H10L14.5 5V10.5H0.5Z" fill="#fff" stroke="#b0d0f8"/><path d="M10 0.5V5H14.5" fill="#f4f8ff" stroke="#a8c0f0"/><rect x="14" y="4" width="1" height="1" fill="#507090"/><g fill="#bff0ff"><rect x="3" y="2" width="6" height="1"/><rect x="3" y="4" width="6" height="1"/><rect x="3" y="6" width="7" height="1"/><rect x="3" y="8" width="2" height="1"/></g><rect x="1" y="10" width="4" height="1" fill="#6080a0"/><path d="M7 8.5L10 11.5L14.3 6.6" fill="none" stroke="#208010" stroke-width="3" stroke-linejoin="round"/><path d="M7.3 8.7L10 11.3L14 6.8" fill="none" stroke="#70e030" stroke-width="1.4"/></svg>
<div class="t" style="left:306px;top:628px;color:#000">02.12.2022 13:06:10</div>
<div class="t" style="left:447px;top:628px;color:#000">ООО "Сазонов"</div>
<div class="t" style="left:744px;top:628px;color:#000">Сура ООО</div>
<div class="t" style="left:1041px;top:628px;color:#000">Подготовлен к отправке</div>
<div style="left:303px;top:643px;width:139px;height:19px;background:#6c8ef8"></div>
<div style="left:443px;top:643px;width:891px;height:19px;background:#d4fafc"></div>
<div style="left:443px;top:642px;width:891px;height:1px;background:#a8d0f8"></div>
<div style="left:739px;top:643px;width:1px;height:19px;background:#b8d8f8"></div>
<div style="left:1036px;top:643px;width:1px;height:19px;background:#b8d8f8"></div>
<svg style="left:286px;top:646px;" width="16" height="14" viewBox="0 0 16 14"><path d="M0.5 0.5H10L14.5 5V10.5H0.5Z" fill="#fff" stroke="#b0d0f8"/><path d="M10 0.5V5H14.5" fill="#f4f8ff" stroke="#a8c0f0"/><rect x="14" y="4" width="1" height="1" fill="#507090"/><g fill="#bff0ff"><rect x="3" y="2" width="6" height="1"/><rect x="3" y="4" width="6" height="1"/><rect x="3" y="6" width="7" height="1"/><rect x="3" y="8" width="2" height="1"/></g><rect x="1" y="10" width="4" height="1" fill="#6080a0"/><path d="M7 8.5L10 11.5L14.3 6.6" fill="none" stroke="#208010" stroke-width="3" stroke-linejoin="round"/><path d="M7.3 8.7L10 11.3L14 6.8" fill="none" stroke="#70e030" stroke-width="1.4"/></svg>
<div class="t" style="left:306px;top:647px;color:#fff">02.12.2022 13:06:10</div>
<div class="t" style="left:447px;top:647px;color:#000">ООО "Сазонов"</div>
<div class="t" style="left:744px;top:647px;color:#000">Сура ООО</div>
<div class="t" style="left:1041px;top:647px;color:#000">Подготовлен к отправке</div>
<div style="left:46px;top:610px;width:295px;height:18px;border:1px solid #6a6a58;background:#fff"></div>
<div class="t" style="left:52px;top:613px;font-size:11.5px;color:#3a3a6a">7850 · Входящие — Яндекс Почта — Яндекс Браузер</div>
<div style="left:86px;top:636px;width:216px;height:21px;border:1px solid #d8d8f8;border-top:2px solid #d8d8f8;background:#fff"></div>
<div style="left:95px;top:647px;width:36px;height:4px;background:#a8d0f8"></div>
<div style="left:144px;top:647px;width:127px;height:4px;background:#b0d4fa"></div>
<div style="left:116px;top:648px;width:3px;height:3px;background:#f02020"></div>
<div style="left:121px;top:649px;width:20px;height:1px;background:#a0a0a0"></div>
<svg style="left:280px;top:647px;" width="14" height="6" viewBox="0 0 14 6"><path d="M1 1L13 12M13 1L1 12" stroke="#222" stroke-width="1.3"/></svg>
<svg style="left:265px;top:140px;" width="115" height="60" viewBox="0 0 115 60"><path d="M9 9C35 7.5 75 7.5 97 9Q104 10 104 15L104 42Q104 47 98 47C65 47 35 50 18 54Q14 55 13.5 50L9 13Q8.5 9 9 9Z" fill="none" stroke="#e41c1c" stroke-width="5" stroke-linejoin="round"/><path d="M9.5 6C35 4.5 75 4.5 99 6.5" fill="none" stroke="#e41c1c" stroke-width="5" stroke-linecap="round"/></svg>
</body></html>
